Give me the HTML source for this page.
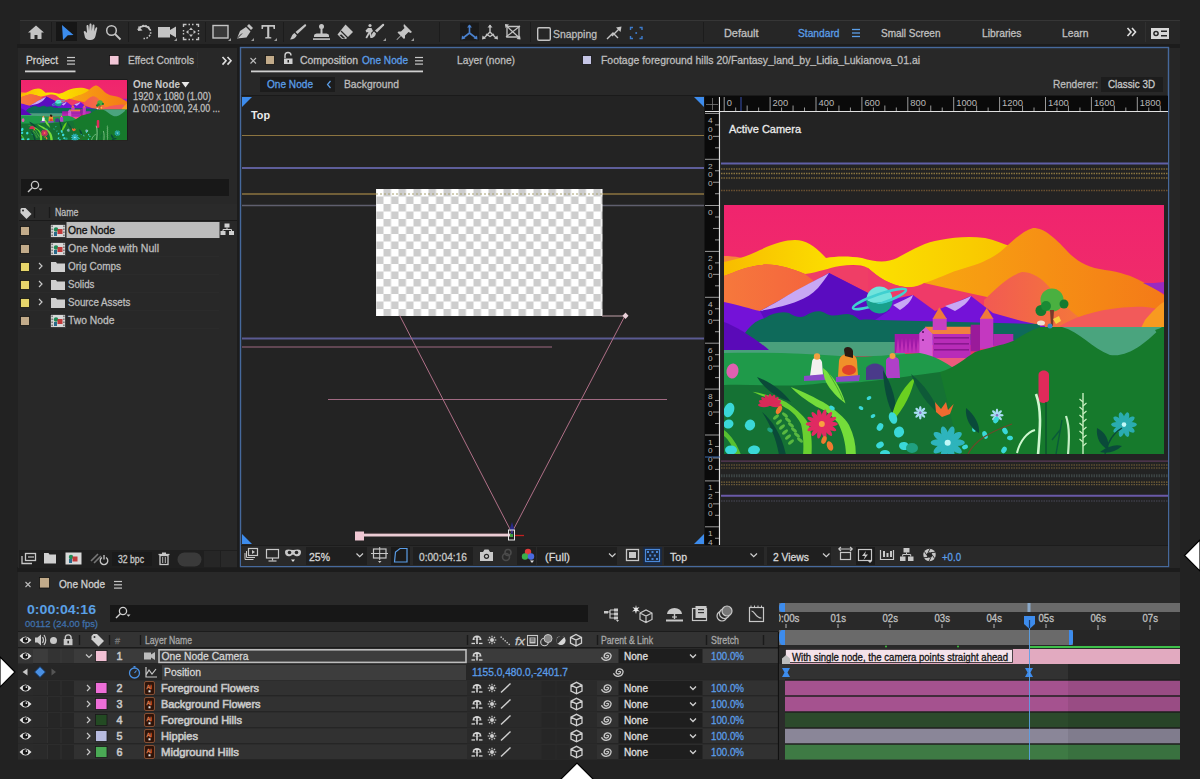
<!DOCTYPE html>
<html><head><meta charset="utf-8">
<style>
*{margin:0;padding:0}
html,body{width:1200px;height:779px;overflow:hidden;background:#1e1e1e}
svg{display:block;font-family:"Liberation Sans",sans-serif}
</style></head><body>
<svg width="1200" height="779" viewBox="0 0 1200 779">
<rect x="0" y="0" width="1200" height="779" fill="#222222" />
<rect x="20" y="20" width="1160" height="24" fill="#262626" />
<line x1="20" y1="20.5" x2="1180" y2="20.5" stroke="#363636" stroke-width="1" />
<rect x="17" y="44" width="1163" height="4" fill="#1c1c1c" />
<rect x="17" y="567" width="1163" height="5" fill="#1c1c1c" />
<rect x="237" y="44" width="3" height="524" fill="#1c1c1c" />
<rect x="18" y="48" width="219" height="520" fill="#282828" />
<rect x="240" y="47" width="929" height="521" fill="#232323" />
<rect x="1169" y="48" width="11" height="520" fill="#262626" />
<rect x="18" y="572" width="1162" height="207" fill="#292929" />
<defs><linearGradient id="gsky" x1="0" x2="0" y1="0" y2="1"><stop offset="0" stop-color="#f0246e"/><stop offset="1" stop-color="#ee3a62"/></linearGradient><linearGradient id="gy" x1="0" x2="1" y1="0" y2="0"><stop offset="0" stop-color="#f8bc00"/><stop offset="0.45" stop-color="#fce400"/><stop offset="1" stop-color="#f8c400"/></linearGradient><linearGradient id="go" x1="0" x2="1" y1="0" y2="0"><stop offset="0" stop-color="#f8a610"/><stop offset="1" stop-color="#f47a18"/></linearGradient><linearGradient id="gol" x1="0" x2="1" y1="0" y2="0"><stop offset="0" stop-color="#f6783c"/><stop offset="1" stop-color="#f4603e"/></linearGradient><linearGradient id="gc" x1="0" x2="1" y1="0" y2="0"><stop offset="0" stop-color="#f25a52"/><stop offset="1" stop-color="#f47a38"/></linearGradient><clipPath id="lc"><rect x="724" y="205" width="440" height="249"/></clipPath></defs>
<line x1="51.5" y1="22" x2="51.5" y2="42" stroke="#1c1c1c" stroke-width="1" />
<line x1="128.5" y1="22" x2="128.5" y2="42" stroke="#1c1c1c" stroke-width="1" />
<line x1="205.5" y1="22" x2="205.5" y2="42" stroke="#1c1c1c" stroke-width="1" />
<line x1="283.5" y1="22" x2="283.5" y2="42" stroke="#1c1c1c" stroke-width="1" />
<line x1="439.5" y1="22" x2="439.5" y2="42" stroke="#1c1c1c" stroke-width="1" />
<line x1="530.5" y1="22" x2="530.5" y2="42" stroke="#1c1c1c" stroke-width="1" />
<line x1="703.5" y1="22" x2="703.5" y2="42" stroke="#1c1c1c" stroke-width="1" />
<path d="M36,25.5 L28,32.5 L30.5,32.5 L30.5,39 L34.5,39 L34.5,35 L37.5,35 L37.5,39 L41.5,39 L41.5,32.5 L44,32.5 Z" fill="#c4c4c4" stroke="none" stroke-width="1" />
<rect x="56" y="22" width="21" height="19" fill="#161616" />
<path d="M62,25 L73.5,35 L67.8,35.3 L63,40 Z" fill="#3b8ced" stroke="none" stroke-width="1" />
<path d="M84,33 C83,31 85,30 86,32 L87,33 L86.5,26 C86.5,24.5 88.5,24.5 88.5,26 L89,31 L89.5,24.5 C89.5,23 91.5,23 91.5,24.5 L91.8,31 L92.5,25.5 C92.6,24 94.5,24 94.5,25.5 L94.3,31.5 L95.5,28 C96,26.8 97.5,27.2 97.2,28.5 L95.5,36 C95,38.5 93,40 90.5,40 L89,40 C87,40 86,39 85,37.5 Z" fill="#c4c4c4" stroke="none" stroke-width="1" />
<circle cx="111.5" cy="30.5" r="4.8" fill="none" stroke="#c4c4c4" stroke-width="1.5"/>
<line x1="115" y1="34" x2="120.5" y2="39.5" stroke="#c4c4c4" stroke-width="1.8" />
<path d="M138,30 A6.5,6.5 0 1 1 143.5,38.5" fill="none" stroke="#c4c4c4" stroke-width="1.6" stroke-dasharray="1.6 1.4"/>
<path d="M138.5,26 L138,31 L142.5,30.5 Z" fill="#c4c4c4" stroke="none" stroke-width="1" />
<path d="M139,28.5 A6.5,6.5 0 0 1 150,30" fill="none" stroke="#c4c4c4" stroke-width="1.6" />
<path d="M158,27 L170,27 L170,30 L176,26.5 L176,37.5 L170,34 L170,37.5 L158,37.5 Z" fill="#c4c4c4" stroke="none" stroke-width="1" />
<path d="M174,41 L177,38 L177,41 Z" fill="#9a9a9a" stroke="none" stroke-width="1" />
<path d="M183.5,27 L183.5,24.5 L186.5,24.5 M196,24.5 L198.5,24.5 L198.5,27 M198.5,37 L198.5,39.5 L196,39.5 M186.5,39.5 L183.5,39.5 L183.5,37" fill="none" stroke="#c4c4c4" stroke-width="1.4" />
<path d="M188.5,24.5 L190,24.5 M192,24.5 L193.5,24.5 M188.5,39.5 L190,39.5 M192,39.5 L193.5,39.5 M183.5,30 L183.5,31.5 M183.5,33 L183.5,34.5 M198.5,30 L198.5,31.5 M198.5,33 L198.5,34.5" fill="none" stroke="#c4c4c4" stroke-width="1.4" />
<path d="M191,27.5 L189,30 L193,30 Z M191,37 L189,34.5 L193,34.5 Z M186,32 L188.5,30 L188.5,34 Z M196,32 L193.5,30 L193.5,34 Z" fill="#c4c4c4" stroke="none" stroke-width="1" />
<rect x="213" y="25.5" width="15" height="12.5" fill="#3a3a3a" stroke="#c4c4c4" stroke-width="1.4"/>
<path d="M228,41 L231,38 L231,41 Z" fill="#9a9a9a" stroke="none" stroke-width="1" />
<path d="M237,38.5 L240,31 L246,27 L250.5,31.5 L246.5,37.5 Z" fill="#c4c4c4" stroke="none" stroke-width="1" />
<path d="M247,26 L249,24 L253,28 L251,30 Z" fill="#c4c4c4" stroke="none" stroke-width="1" />
<line x1="237.5" y1="38" x2="242" y2="33.5" stroke="#262626" stroke-width="1" />
<path d="M251,41 L254,38 L254,41 Z" fill="#9a9a9a" stroke="none" stroke-width="1" />
<path d="M261.5,25 L275,25 L275,29 L273.6,29 L273.2,26.8 L269.3,26.8 L269.3,37 L271.3,37.2 L271.3,38.5 L265.2,38.5 L265.2,37.2 L267.2,37 L267.2,26.8 L263.3,26.8 L262.9,29 L261.5,29 Z" fill="#c4c4c4" stroke="none" stroke-width="1" />
<path d="M274,41 L277,38 L277,41 Z" fill="#9a9a9a" stroke="none" stroke-width="1" />
<path d="M304.5,24.5 C306,24 306.5,25 306,26 L297.5,34 L295.5,32 Z" fill="#c4c4c4" stroke="none" stroke-width="1" />
<path d="M294.5,33 L296.8,35.2 C296,38 293,39.5 290,39.5 C291.5,38 291.5,34.5 294.5,33 Z" fill="#c4c4c4" stroke="none" stroke-width="1" />
<circle cx="321.5" cy="26.5" r="2.5" fill="#c4c4c4"/>
<rect x="320.5" y="28" width="2" height="6" fill="#c4c4c4" />
<path d="M314,35.5 C314,34 316,33.5 318,33.5 L325,33.5 C327,33.5 329,34 329,35.5 L329,37 L314,37 Z" fill="#c4c4c4" stroke="none" stroke-width="1" />
<rect x="313" y="38.3" width="17" height="1.6" fill="#c4c4c4" />
<path d="M345.5,24.5 L353,32 L346,39 L342,39 L337.5,34.5 Z" fill="#c4c4c4" stroke="none" stroke-width="1" />
<path d="M341,31 L348.5,38.5" fill="none" stroke="#262626" stroke-width="1.2" />
<path d="M339.5,35 L343,38.5 L345.5,38.5 L341.5,34.5 Z" fill="#262626" stroke="none" stroke-width="1" />
<circle cx="370" cy="25.5" r="1.6" fill="#c4c4c4"/>
<path d="M368,28 L371.5,28 L373,31 L371,33 L372.5,38 L370.5,38 L369.5,34 L367,38.5 L365.5,37.5 L368.5,32 L366.5,32.5 L365.5,30.5 Z" fill="#c4c4c4" stroke="none" stroke-width="1" />
<path d="M382.5,24 C384,23.5 384.5,24.5 384,25.5 L377,32.5 L375,30.5 Z" fill="#c4c4c4" stroke="none" stroke-width="1" />
<path d="M374,31.5 L376,33.5 C375.5,36.5 373,38 370.5,38 C372,36.5 371.5,33 374,31.5 Z" fill="#c4c4c4" stroke="none" stroke-width="1" />
<path d="M383,41 L386,38 L386,41 Z" fill="#9a9a9a" stroke="none" stroke-width="1" />
<path d="M404,24 L412,32 L410.5,33 L408.5,32 L405,35.5 L405,38 L404,39 L401,36 L397,40 L396.5,39.5 L400.5,35.5 L397.5,32.5 L398.5,31.5 L401,31.5 L404.5,28 L403.5,26 Z" fill="#c4c4c4" stroke="none" stroke-width="1" />
<path d="M411,41 L414,38 L414,41 Z" fill="#9a9a9a" stroke="none" stroke-width="1" />
<rect x="460" y="22.5" width="19" height="18" fill="#1a1a1a" />
<path d="M469.5,25 L469.5,33 M469.5,33 L463,38 M469.5,33 L476,38" fill="none" stroke="#4a80cc" stroke-width="1.6" />
<path d="M467,27.5 L469.5,24.5 L472,27.5 Z M462,35.5 L461.5,39.5 L465.5,38.5 Z M477,35.5 L477.5,39.5 L473.5,38.5 Z" fill="#4a80cc" stroke="none" stroke-width="1" />
<path d="M490,25 L490,32 L484,38 M490,32 L496,38 M486,34 L490,36.5 L494,34" fill="none" stroke="#c4c4c4" stroke-width="1.4" />
<path d="M487.5,27.5 L490,24.5 L492.5,27.5 Z M482.5,35.5 L482,39.5 L486,38.5 Z M497.5,35.5 L498,39.5 L494,38.5 Z" fill="#c4c4c4" stroke="none" stroke-width="1" />
<path d="M507,26.5 L519,26.5 L519,37 L507,37 Z" fill="none" stroke="#c4c4c4" stroke-width="1.3" transform="skewX(0)"/>
<path d="M505.5,25 L520,38.5 M506,37 L520,26" fill="none" stroke="#c4c4c4" stroke-width="1.2" />
<path d="M505,24 L509,24.5 L505.5,28 Z M520.5,39.5 L516.5,39 L520,35.5 Z" fill="#c4c4c4" stroke="none" stroke-width="1" />
<rect x="537.7" y="27.7" width="12.6" height="12.6" fill="none" stroke="#c4c4c4" stroke-width="1.4" rx="1.2"/>
<text x="553" y="37.8" font-size="11.2" fill="#bdbdbd" font-weight="normal" text-anchor="start" textLength="44" lengthAdjust="spacingAndGlyphs" stroke="#bdbdbd" stroke-width="0.3" >Snapping</text>
<path d="M607,39 L613,33 L618,38 M612,36 L620,28" fill="none" stroke="#c4c4c4" stroke-width="1.4" />
<path d="M621.5,26.5 L616,27.5 L620.5,32 Z" fill="#c4c4c4" stroke="none" stroke-width="1" />
<path d="M630.5,30 L630.5,27.5 L633,27.5 M639.5,27.5 L642,27.5 L642,30 M642,36 L642,38.5 L639.5,38.5 M633,38.5 L630.5,38.5 L630.5,36" fill="none" stroke="#3e7ccc" stroke-width="1.4" />
<circle cx="636.2" cy="33" r="1" fill="#3e7ccc"/>
<text x="724" y="37" font-size="11.3" fill="#c0c0c0" font-weight="normal" text-anchor="start" textLength="34.5" lengthAdjust="spacingAndGlyphs" stroke="#c0c0c0" stroke-width="0.3" >Default</text>
<text x="798" y="37" font-size="11.3" fill="#5b9ee8" font-weight="normal" text-anchor="start" textLength="41.5" lengthAdjust="spacingAndGlyphs" stroke="#5b9ee8" stroke-width="0.3" >Standard</text>
<line x1="852" y1="29.5" x2="860" y2="29.5" stroke="#5b9ee8" stroke-width="1.3" />
<line x1="852" y1="33" x2="860" y2="33" stroke="#5b9ee8" stroke-width="1.3" />
<line x1="852" y1="36.5" x2="860" y2="36.5" stroke="#5b9ee8" stroke-width="1.3" />
<text x="881" y="37" font-size="11.3" fill="#c0c0c0" font-weight="normal" text-anchor="start" textLength="59.5" lengthAdjust="spacingAndGlyphs" stroke="#c0c0c0" stroke-width="0.3" >Small Screen</text>
<text x="982" y="37" font-size="11.3" fill="#c0c0c0" font-weight="normal" text-anchor="start" textLength="39.5" lengthAdjust="spacingAndGlyphs" stroke="#c0c0c0" stroke-width="0.3" >Libraries</text>
<text x="1062" y="37" font-size="11.3" fill="#c0c0c0" font-weight="normal" text-anchor="start" textLength="26.5" lengthAdjust="spacingAndGlyphs" stroke="#c0c0c0" stroke-width="0.3" >Learn</text>
<path d="M1127.5,28 L1131,32 L1127.5,36 M1132,28 L1135.5,32 L1132,36" fill="none" stroke="#e0e0e0" stroke-width="1.6" />
<line x1="1145.5" y1="22" x2="1145.5" y2="42" stroke="#303030" stroke-width="1" />
<rect x="1151" y="28" width="18" height="11" fill="#d8d8d8" />
<circle cx="1156" cy="33.5" r="2.8" fill="#262626"/>
<circle cx="1156" cy="33.5" r="1.3" fill="#d8d8d8"/>
<rect x="1161" y="30.5" width="6" height="1.5" fill="#262626" />
<rect x="1161" y="35" width="6" height="1.5" fill="#262626" />
<text x="26" y="64.2" font-size="11" fill="#d0d0d0" font-weight="normal" text-anchor="start" textLength="32" lengthAdjust="spacingAndGlyphs" stroke="#d0d0d0" stroke-width="0.3" >Project</text>
<line x1="67" y1="57.5" x2="75" y2="57.5" stroke="#c8c8c8" stroke-width="1.2" />
<line x1="67" y1="60.8" x2="75" y2="60.8" stroke="#c8c8c8" stroke-width="1.2" />
<line x1="67" y1="64.1" x2="75" y2="64.1" stroke="#c8c8c8" stroke-width="1.2" />
<rect x="25" y="70.5" width="50.5" height="1.8" fill="#d0d0d0" />
<rect x="109.5" y="55.5" width="9.5" height="9.5" fill="#f2c6d6" stroke="#111" stroke-width="0.8"/>
<text x="128" y="64.2" font-size="11" fill="#bdbdbd" font-weight="normal" text-anchor="start" textLength="66" lengthAdjust="spacingAndGlyphs" stroke="#bdbdbd" stroke-width="0.3" >Effect Controls</text>
<line x1="197.5" y1="52" x2="197.5" y2="68" stroke="#2e2e2e" stroke-width="1" />
<path d="M222.5,57 L226,60.8 L222.5,64.6 M227.5,57 L231,60.8 L227.5,64.6" fill="none" stroke="#e0e0e0" stroke-width="1.6" />
<rect x="20.5" y="79.5" width="107" height="61" fill="#111" />
<g transform="translate(21,80) scale(0.2409,0.2419)"><g transform="translate(-724,-205)" clip-path="url(#lc)"><rect x="724" y="205" width="440" height="249" fill="url(#gsky)"/><path d="M724,256 C735,256 745,258 752,262 L752,290 L724,290 Z" fill="#f6863a" /><path d="M724,270 C780,262 860,262 930,275 C960,270 990,262 1010,276 L1010,320 L724,320 Z" fill="#ef3e66" /><path d="M724,262 C738,259 748,256 760,250 C775,243 785,240 795,240 C806,240 815,246 826,258 C836,256 850,256 862,258 C875,262 887,263 897,258 C910,251 925,242 940,240 C955,237 970,236 985,238 C995,240 1003,244 1010,246 L1010,262 C990,262 970,268 953,273 C935,281 920,289 905,287 C890,285 878,277 868,268 C860,264 850,265 840,266 C828,268 820,272 805,274 C790,268 775,263 760,265 C745,267 735,272 724,276 Z" fill="url(#gy)" /><path d="M724,276 C735,272 745,267 760,265 C775,263 790,268 805,274 C815,282 825,290 835,300 L835,330 L724,330 Z" fill="url(#gol)" /><path d="M924,283 C935,280 950,272 965,268 C980,264 992,258 1000,252 C1010,244 1020,232 1033,228 C1045,228 1055,238 1071,255 C1080,263 1090,268 1105,270 C1120,272 1132,276 1141,281 C1150,286 1158,290 1164,295 L1164,340 L924,340 Z" fill="url(#go)" /><path d="M868,268 C878,277 890,285 905,287 C915,288 920,285 924,283 C945,288 965,292 987,297 C992,310 995,320 996,330 L868,330 Z" fill="#ef3a68" /><path d="M984,300 C995,290 1008,276 1022,272 C1032,272 1042,278 1050,288 C1058,298 1066,308 1080,318 L1090,330 L984,330 Z" fill="url(#gc)" /><path d="M1060,326 C1080,314 1105,308 1133,307 C1145,306 1152,308 1158,309 L1164,309 L1164,330 L1060,330 Z" fill="#f25a5a" /><path d="M1145,320 C1152,312 1158,305 1164,302 L1164,330 L1140,330 Z" fill="#f89a20" /><path d="M1143,283 C1150,283 1158,283 1164,282 L1164,294 C1157,290 1150,286 1143,283 Z" fill="#9a2ac0" /><path d="M724,302 C740,305 750,309 760,311 L790,300 L829,273 L868,293 L880,302 L913,295 L935,311 L971,296 L993,313 C1010,318 1025,322 1045,326 L1045,345 L724,345 Z" fill="#7412d8" /><path d="M760,311 L829,273 L868,293 L890,310 L860,330 L770,330 Z" fill="#5a0cc0" /><path d="M760,311 C772,305 785,297 795,291 C808,284 820,278 829,273 C826,278 822,283 818,288 C812,294 806,298 798,301 C788,305 776,308 760,311 Z" fill="#c8a8f4" /><path d="M893,305 C900,302 908,298 913,295 C911,302 906,306 900,310 Z" fill="#c8a8f4" /><path d="M945,306 C955,303 965,299 971,296 C968,303 962,307 955,311 Z" fill="#c8a8f4" /><path d="M740,345 C742,334 752,321 765,318 C772,313 782,311 789,313 C795,317 800,318 805,316 C812,311 820,310 825,313 C833,318 840,314 847,314 C853,314 857,318 860,320 C870,319 880,320 890,322 L905,322 L905,345 Z" fill="#0e6a5a" /><path d="M880,320 L1040,324 L1040,340 L880,340 Z" fill="#0e6a5a" /><circle cx="879.5" cy="300" r="13" fill="#18a08c" /><path d="M866.5,300 A13,13 0 0 1 892.5,299 C885,301 876,306 866.5,300 Z" fill="#70e4dc" /><ellipse cx="879.5" cy="299" rx="28" ry="4.8" fill="none" stroke="#40d0d0" stroke-width="2.6" transform="rotate(-19 879.5 299)"/><path d="M866.5,300 A13,13 0 0 0 892.5,301 C885,303 876,307 866.5,300 Z" fill="#18a08c" /><path d="M724,342 L905,342 L905,356 L724,356 Z" fill="#4aa07c" /><path d="M724,322 C735,326 755,338 769,350 L724,350 Z" fill="#5a0ab8" /><path d="M894.7,334 L920,334 L920,353 L894.7,353 Z" fill="#a01aa8" /><path d="M896,353 L898,338 L900,353 Z" fill="#c030b8" /><path d="M900,353 L902,338 L904,353 Z" fill="#c030b8" /><path d="M904,353 L906,338 L908,353 Z" fill="#c030b8" /><path d="M908,353 L910,338 L912,353 Z" fill="#c030b8" /><path d="M912,353 L914,338 L916,353 Z" fill="#c030b8" /><path d="M916,353 L918,338 L920,353 Z" fill="#c030b8" /><path d="M932.7,330 L970.7,330 L970.7,358 L932.7,358 Z" fill="#b82cb8" /><path d="M919.3,333 L926,326.7 L932.7,333 L932.7,356.7 L919.3,356.7 Z" fill="#d45ad4" /><path d="M925,326.7 L970.7,326.7 L970.7,334 L932.7,334 Z" fill="#f28040" /><path d="M936,358 L966.7,358 L962,368.7 L940,368.7 Z" fill="#ee5a7c" /><path d="M932.7,318 L946.7,318 L946.7,330 L932.7,330 Z" fill="#c840c0" /><path d="M932.7,318.7 L939.3,307.3 L946.7,318.7 Z" fill="#f07a3a" /><path d="M970.7,324.7 L980,324.7 L980,351.3 L970.7,351.3 Z" fill="#9a1a9a" /><path d="M980,318 L993.3,318 L993.3,348.7 L980,348.7 Z" fill="#c438c0" /><path d="M980,318.7 L986.7,308 L993.3,318.7 Z" fill="#f07a3a" /><path d="M993.3,334 L1013.3,334 L1013.3,346 L993.3,346 Z" fill="#b02aae" /><rect x="934" y="337" width="35" height="1.6" fill="#8a1890"/><rect x="934" y="343" width="35" height="1.6" fill="#8a1890"/><rect x="934" y="349" width="35" height="1.6" fill="#8a1890"/><rect x="922" y="331" width="2" height="2" fill="#7a1a80"/><rect x="922" y="339" width="2" height="2" fill="#7a1a80"/><path d="M724,353 C760,352 800,353 840,356 C870,358 895,354 920,353 C935,356 945,362 955,369 L955,420 L724,420 Z" fill="#1f9a4a" /><path d="M940,372 C955,368 965,358 975,352 C990,347 1000,346 1013,341 C1022,336 1030,330 1040,327 L1164,327 L1164,454 L940,454 Z" fill="#167a2c" /><path d="M1062,327 C1080,332 1092,348 1110,355 C1130,358 1148,340 1162,327 Z" fill="#4aa47e" /><path d="M1155,330 L1164,327 L1164,345 Z" fill="#167a2c" /><circle cx="1052" cy="300" r="11.5" fill="#4ab040" /><circle cx="1041" cy="310.5" r="5.5" fill="#167a30" /><circle cx="1064" cy="304" r="4.5" fill="#167a30" /><circle cx="1046" cy="306" r="5" fill="#1a8a34" /><path d="M1050,310 L1054,310 L1053,326 L1051,326 Z" fill="#7a3a2a" /><ellipse cx="1041" cy="323" rx="4" ry="2.5" fill="#f0e0d0" transform="rotate(0 1041 323)"/><ellipse cx="1050" cy="326" rx="2.5" ry="2.5" fill="#3a8ac0" transform="rotate(0 1050 326)"/><path d="M1053,319 L1059,316 L1061,321 L1056,324 Z" fill="#f8d040" /><path d="M724,385 C760,384 790,388 823,383 C850,385 880,380 940,372 L960,454 L724,454 Z" fill="#157234" /><path d="M812,362 C812,357 820,356 822,362 L823,375 L810,376 Z" fill="#f4f0f0" /><circle cx="817" cy="356.5" r="3.2" fill="#f0a040" /><path d="M804,376 L826,374 L826,380 L804,381 Z" fill="#8a48c8" /><path d="M839,361 C840,352 856,351 857,361 L858,376 L838,377 Z" fill="#f0902a" /><path d="M844,350 C844,346 852,346 853,351 L853,358 L845,356 Z" fill="#2a1a12" /><ellipse cx="849" cy="370" rx="7" ry="5" fill="#e0402a" transform="rotate(0 849 370)"/><path d="M836,377 L860,375 L859,381 L836,382 Z" fill="#8a48c8" /><path d="M886,361 C886,355 899,355 899,361 L900,378 L886,378 Z" fill="#b040c8" /><circle cx="892.5" cy="356" r="3" fill="#f0a040" /><path d="M866,368 C870,362 880,362 884,368 L886,379 L866,380 Z" fill="#4a3a8a" /><path d="M757,377 C770,382 782,390 791,402 C778,398 765,390 757,377 Z" fill="#0a4a38" /><path d="M752.5,391.7 C766,394 778,398 786,402 C798,410 806,418 809,425 C812,435 812,445 811.5,455 L803,455 C804,445 803,432 801,424 C796,414 790,410 783.5,406.4 C773,400 762,396 752.5,391.7 Z" fill="#6ad030" /><path d="M790.8,387 C805,392 815,398 823,402 C836,410 845,418 849,425 C854,435 856,445 855.8,455 L846,455 C846,445 843,432 838,423 C832,415 825,410 816,406.4 C806,400 797,394 790.8,387 Z" fill="#74dc3a" /><path d="M823,368 C832,375 840,385 845.5,403.5 C838,398 830,390 826,382 C824,378 823,372 823,368 Z" fill="#7ae040" /><path d="M828,372 C834,382 840,392 843,400" fill="none" stroke="#3a9a2a" stroke-width="0.8"/><path d="M883,370 C892,385 897,400 896,420 C890,410 884,395 883,370 Z" fill="#0a4a3a" /><path d="M915,377 C912,392 905,408 891,423 C892,408 900,390 915,377 Z" fill="#6ad020" /><path d="M911,374 C925,385 935,400 939,414 C928,405 918,392 911,374 Z" fill="#0e5a38" /><path d="M724,430 C732,436 738,446 741,455 L735,455 C733,447 729,440 724,436 Z" fill="#58c030" /><path d="M762,412 C772,420 782,435 786,455 L779,455 C776,438 770,424 762,412 Z" fill="#0a4a38" /><ellipse cx="776" cy="417" rx="3.6" ry="1.5" fill="#58b840" transform="rotate(-40 776 417)"/><ellipse cx="785" cy="415" rx="3.6" ry="1.5" fill="#58b840" transform="rotate(40 785 415)"/><ellipse cx="779" cy="422" rx="3.6" ry="1.5" fill="#58b840" transform="rotate(-40 779 422)"/><ellipse cx="788" cy="420" rx="3.6" ry="1.5" fill="#58b840" transform="rotate(40 788 420)"/><ellipse cx="782" cy="427" rx="3.6" ry="1.5" fill="#58b840" transform="rotate(-40 782 427)"/><ellipse cx="791" cy="425" rx="3.6" ry="1.5" fill="#58b840" transform="rotate(40 791 425)"/><ellipse cx="785" cy="432" rx="3.6" ry="1.5" fill="#58b840" transform="rotate(-40 785 432)"/><ellipse cx="794" cy="430" rx="3.6" ry="1.5" fill="#58b840" transform="rotate(40 794 430)"/><ellipse cx="788" cy="437" rx="3.6" ry="1.5" fill="#58b840" transform="rotate(-40 788 437)"/><ellipse cx="797" cy="435" rx="3.6" ry="1.5" fill="#58b840" transform="rotate(40 797 435)"/><ellipse cx="791" cy="442" rx="3.6" ry="1.5" fill="#58b840" transform="rotate(-40 791 442)"/><ellipse cx="800" cy="440" rx="3.6" ry="1.5" fill="#58b840" transform="rotate(40 800 440)"/><ellipse cx="829.8" cy="424.0" rx="8" ry="2.4" fill="#e02a62" transform="rotate(0 829.8 424.0)"/><ellipse cx="829.0" cy="427.0" rx="8" ry="2.4" fill="#e02a62" transform="rotate(26 829.0 427.0)"/><ellipse cx="826.8" cy="429.5" rx="8" ry="2.4" fill="#e02a62" transform="rotate(51 826.8 429.5)"/><ellipse cx="823.6" cy="430.8" rx="8" ry="2.4" fill="#e02a62" transform="rotate(77 823.6 430.8)"/><ellipse cx="820.0" cy="430.8" rx="8" ry="2.4" fill="#e02a62" transform="rotate(103 820.0 430.8)"/><ellipse cx="816.8" cy="429.5" rx="8" ry="2.4" fill="#e02a62" transform="rotate(129 816.8 429.5)"/><ellipse cx="814.6" cy="427.0" rx="8" ry="2.4" fill="#e02a62" transform="rotate(154 814.6 427.0)"/><ellipse cx="813.8" cy="424.0" rx="8" ry="2.4" fill="#e02a62" transform="rotate(180 813.8 424.0)"/><ellipse cx="814.6" cy="421.0" rx="8" ry="2.4" fill="#e02a62" transform="rotate(206 814.6 421.0)"/><ellipse cx="816.8" cy="418.5" rx="8" ry="2.4" fill="#e02a62" transform="rotate(231 816.8 418.5)"/><ellipse cx="820.0" cy="417.2" rx="8" ry="2.4" fill="#e02a62" transform="rotate(257 820.0 417.2)"/><ellipse cx="823.6" cy="417.2" rx="8" ry="2.4" fill="#e02a62" transform="rotate(283 823.6 417.2)"/><ellipse cx="826.8" cy="418.5" rx="8" ry="2.4" fill="#e02a62" transform="rotate(309 826.8 418.5)"/><ellipse cx="829.0" cy="421.0" rx="8" ry="2.4" fill="#e02a62" transform="rotate(334 829.0 421.0)"/><circle cx="821.8" cy="424" r="3" fill="#f8a040" /><ellipse cx="764.0" cy="405.0" rx="6" ry="2.2" fill="#d82a58" transform="rotate(0 764.0 405.0)"/><ellipse cx="764.5" cy="403.1" rx="6" ry="2.2" fill="#d82a58" transform="rotate(22 764.5 403.1)"/><ellipse cx="765.8" cy="401.5" rx="6" ry="2.2" fill="#d82a58" transform="rotate(45 765.8 401.5)"/><ellipse cx="767.7" cy="400.4" rx="6" ry="2.2" fill="#d82a58" transform="rotate(68 767.7 400.4)"/><ellipse cx="770.0" cy="400.0" rx="6" ry="2.2" fill="#d82a58" transform="rotate(90 770.0 400.0)"/><ellipse cx="772.3" cy="400.4" rx="6" ry="2.2" fill="#d82a58" transform="rotate(112 772.3 400.4)"/><ellipse cx="774.2" cy="401.5" rx="6" ry="2.2" fill="#d82a58" transform="rotate(135 774.2 401.5)"/><ellipse cx="775.5" cy="403.1" rx="6" ry="2.2" fill="#d82a58" transform="rotate(158 775.5 403.1)"/><ellipse cx="776.0" cy="405.0" rx="6" ry="2.2" fill="#d82a58" transform="rotate(180 776.0 405.0)"/><ellipse cx="779" cy="410" rx="2.5" ry="4.5" fill="#f07a30" transform="rotate(30 779 410)"/><path d="M1038.5,375 C1038.5,369 1049,369 1049,375 L1049,400 C1047,404 1040,404 1038.5,400 Z" fill="#e02a5a" /><path d="M1046,402 L1046,455" stroke="#0a4a30" stroke-width="1.2"/><path d="M935,402 L941,409 L946,402 L948,410 L953.7,404 L950,414 L942,417 L936,412 Z" fill="#f06a30" /><ellipse cx="732.5" cy="371" rx="6" ry="7.5" fill="#e060b0" transform="rotate(10 732.5 371)"/><ellipse cx="830" cy="446" rx="3" ry="5" fill="#f07a30" transform="rotate(-20 830 446)"/><ellipse cx="824" cy="440" rx="2.5" ry="4" fill="#f07a30" transform="rotate(20 824 440)"/><ellipse cx="957.1" cy="442.7" rx="7.7" ry="3.4" fill="#2eb4bc" transform="rotate(0 957.1 442.7)"/><ellipse cx="955.3" cy="448.2" rx="7.7" ry="3.4" fill="#2eb4bc" transform="rotate(36 955.3 448.2)"/><ellipse cx="950.6" cy="451.6" rx="7.7" ry="3.4" fill="#2eb4bc" transform="rotate(72 950.6 451.6)"/><ellipse cx="944.8" cy="451.6" rx="7.7" ry="3.4" fill="#2eb4bc" transform="rotate(108 944.8 451.6)"/><ellipse cx="940.1" cy="448.2" rx="7.7" ry="3.4" fill="#2eb4bc" transform="rotate(144 940.1 448.2)"/><ellipse cx="938.4" cy="442.7" rx="7.7" ry="3.4" fill="#2eb4bc" transform="rotate(180 938.4 442.7)"/><ellipse cx="940.1" cy="437.2" rx="7.7" ry="3.4" fill="#2eb4bc" transform="rotate(216 940.1 437.2)"/><ellipse cx="944.8" cy="433.8" rx="7.7" ry="3.4" fill="#2eb4bc" transform="rotate(252 944.8 433.8)"/><ellipse cx="950.6" cy="433.8" rx="7.7" ry="3.4" fill="#2eb4bc" transform="rotate(288 950.6 433.8)"/><ellipse cx="955.3" cy="437.2" rx="7.7" ry="3.4" fill="#2eb4bc" transform="rotate(324 955.3 437.2)"/><circle cx="947.7" cy="442.7" r="3.06" fill="#c0f8f8" /><ellipse cx="1131.0" cy="424.6" rx="5.8" ry="2.6" fill="#2aacb0" transform="rotate(0 1131.0 424.6)"/><ellipse cx="1129.7" cy="428.7" rx="5.8" ry="2.6" fill="#2aacb0" transform="rotate(36 1129.7 428.7)"/><ellipse cx="1126.2" cy="431.3" rx="5.8" ry="2.6" fill="#2aacb0" transform="rotate(72 1126.2 431.3)"/><ellipse cx="1121.8" cy="431.3" rx="5.8" ry="2.6" fill="#2aacb0" transform="rotate(108 1121.8 431.3)"/><ellipse cx="1118.3" cy="428.7" rx="5.8" ry="2.6" fill="#2aacb0" transform="rotate(144 1118.3 428.7)"/><ellipse cx="1117.0" cy="424.6" rx="5.8" ry="2.6" fill="#2aacb0" transform="rotate(180 1117.0 424.6)"/><ellipse cx="1118.3" cy="420.5" rx="5.8" ry="2.6" fill="#2aacb0" transform="rotate(216 1118.3 420.5)"/><ellipse cx="1121.8" cy="417.9" rx="5.8" ry="2.6" fill="#2aacb0" transform="rotate(252 1121.8 417.9)"/><ellipse cx="1126.2" cy="417.9" rx="5.8" ry="2.6" fill="#2aacb0" transform="rotate(288 1126.2 417.9)"/><ellipse cx="1129.7" cy="420.5" rx="5.8" ry="2.6" fill="#2aacb0" transform="rotate(324 1129.7 420.5)"/><circle cx="1124" cy="424.6" r="2.304" fill="#c0f8f8" /><ellipse cx="924.0" cy="412.7" rx="3.0" ry="1.3" fill="#a8dcf4" transform="rotate(0 924.0 412.7)"/><ellipse cx="922.9" cy="415.3" rx="3.0" ry="1.3" fill="#a8dcf4" transform="rotate(45 922.9 415.3)"/><ellipse cx="920.3" cy="416.4" rx="3.0" ry="1.3" fill="#a8dcf4" transform="rotate(90 920.3 416.4)"/><ellipse cx="917.7" cy="415.3" rx="3.0" ry="1.3" fill="#a8dcf4" transform="rotate(135 917.7 415.3)"/><ellipse cx="916.6" cy="412.7" rx="3.0" ry="1.3" fill="#a8dcf4" transform="rotate(180 916.6 412.7)"/><ellipse cx="917.7" cy="410.1" rx="3.0" ry="1.3" fill="#a8dcf4" transform="rotate(225 917.7 410.1)"/><ellipse cx="920.3" cy="409.0" rx="3.0" ry="1.3" fill="#a8dcf4" transform="rotate(270 920.3 409.0)"/><ellipse cx="922.9" cy="410.1" rx="3.0" ry="1.3" fill="#a8dcf4" transform="rotate(315 922.9 410.1)"/><circle cx="920.3" cy="412.7" r="1.206" fill="#8a6ac8" /><ellipse cx="1000.7" cy="415.3" rx="3.0" ry="1.3" fill="#a8dcf4" transform="rotate(0 1000.7 415.3)"/><ellipse cx="999.6" cy="417.9" rx="3.0" ry="1.3" fill="#a8dcf4" transform="rotate(45 999.6 417.9)"/><ellipse cx="997.0" cy="419.0" rx="3.0" ry="1.3" fill="#a8dcf4" transform="rotate(90 997.0 419.0)"/><ellipse cx="994.4" cy="417.9" rx="3.0" ry="1.3" fill="#a8dcf4" transform="rotate(135 994.4 417.9)"/><ellipse cx="993.3" cy="415.3" rx="3.0" ry="1.3" fill="#a8dcf4" transform="rotate(180 993.3 415.3)"/><ellipse cx="994.4" cy="412.7" rx="3.0" ry="1.3" fill="#a8dcf4" transform="rotate(225 994.4 412.7)"/><ellipse cx="997.0" cy="411.6" rx="3.0" ry="1.3" fill="#a8dcf4" transform="rotate(270 997.0 411.6)"/><ellipse cx="999.6" cy="412.7" rx="3.0" ry="1.3" fill="#a8dcf4" transform="rotate(315 999.6 412.7)"/><circle cx="997" cy="415.3" r="1.206" fill="#8a6ac8" /><ellipse cx="729" cy="410" rx="5" ry="7.5" fill="#3ad8d8" transform="rotate(20 729 410)"/><ellipse cx="728.5" cy="424" rx="5" ry="4.5" fill="#3ad8d8" transform="rotate(-20 728.5 424)"/><ellipse cx="731" cy="450" rx="6" ry="4.5" fill="#3ad8d8" transform="rotate(0 731 450)"/><ellipse cx="750" cy="425" rx="5" ry="5.5" fill="#3ad8d8" transform="rotate(30 750 425)"/><ellipse cx="754" cy="450" rx="6" ry="4.5" fill="#3ad8d8" transform="rotate(-10 754 450)"/><ellipse cx="893" cy="418" rx="4" ry="6" fill="#3ad8d8" transform="rotate(-20 893 418)"/><ellipse cx="899" cy="432" rx="5" ry="5.5" fill="#3ad8d8" transform="rotate(20 899 432)"/><ellipse cx="880" cy="427" rx="3" ry="4" fill="#3ad8d8" transform="rotate(30 880 427)"/><ellipse cx="904" cy="446" rx="5" ry="4" fill="#3ad8d8" transform="rotate(10 904 446)"/><ellipse cx="880" cy="445" rx="4" ry="3" fill="#3ad8d8" transform="rotate(-30 880 445)"/><ellipse cx="975" cy="428" rx="2.5" ry="4" fill="#3ad8d8" transform="rotate(20 975 428)"/><ellipse cx="985" cy="435" rx="2.5" ry="4" fill="#3ad8d8" transform="rotate(-20 985 435)"/><ellipse cx="996" cy="420" rx="2.5" ry="3.5" fill="#3ad8d8" transform="rotate(30 996 420)"/><ellipse cx="1005" cy="431" rx="2.5" ry="3.5" fill="#3ad8d8" transform="rotate(-30 1005 431)"/><ellipse cx="1010" cy="438" rx="3" ry="2.2" fill="#3ad8d8" transform="rotate(10 1010 438)"/><ellipse cx="1004" cy="450" rx="2.5" ry="3.5" fill="#3ad8d8" transform="rotate(30 1004 450)"/><ellipse cx="965" cy="447" rx="3" ry="2.2" fill="#3ad8d8" transform="rotate(-20 965 447)"/><ellipse cx="885" cy="453" rx="5" ry="3" fill="#3ad8d8" transform="rotate(0 885 453)"/><ellipse cx="832" cy="408" rx="3" ry="2" fill="#3ad8d8" transform="rotate(30 832 408)"/><ellipse cx="869" cy="398" rx="2.5" ry="1.8" fill="#3ad8d8" transform="rotate(-30 869 398)"/><ellipse cx="861" cy="408" rx="2.5" ry="1.8" fill="#3ad8d8" transform="rotate(30 861 408)"/><ellipse cx="873" cy="416" rx="2.5" ry="1.8" fill="#3ad8d8" transform="rotate(-30 873 416)"/><ellipse cx="912" cy="448" rx="6" ry="5" fill="#20a080" transform="rotate(0 912 448)"/><ellipse cx="770" cy="430" rx="3" ry="2" fill="#20a080" transform="rotate(30 770 430)"/><path d="M1036,394 C1042,410 1040,430 1038,455" stroke="#d0f8d0" stroke-width="2.6" fill="none"/><path d="M1066,416 C1070,428 1069,442 1068,455" stroke="#c8f0c8" stroke-width="2.2" fill="none"/><path d="M1083,393 L1083,455" stroke="#c8f0c0" stroke-width="1.4" fill="none"/><path d="M1083,402 l-3.5,-3 M1083,406 l3.5,-3" stroke="#c8f0c0" stroke-width="1.2"/><path d="M1083,410 l-3.5,-3 M1083,414 l3.5,-3" stroke="#c8f0c0" stroke-width="1.2"/><path d="M1083,418 l-3.5,-3 M1083,422 l3.5,-3" stroke="#c8f0c0" stroke-width="1.2"/><path d="M1083,426 l-3.5,-3 M1083,430 l3.5,-3" stroke="#c8f0c0" stroke-width="1.2"/><path d="M1083,434 l-3.5,-3 M1083,438 l3.5,-3" stroke="#c8f0c0" stroke-width="1.2"/><path d="M1083,442 l-3.5,-3 M1083,446 l3.5,-3" stroke="#c8f0c0" stroke-width="1.2"/><path d="M1017,453 C1020,440 1028,432 1035,430" stroke="#d0f8d0" stroke-width="2" fill="none"/><path d="M1097,428 C1105,432 1110,440 1108,450 C1100,445 1096,438 1097,428 Z" fill="#0a4a3a" /><path d="M1100,452 C1108,446 1116,444 1122,446 C1115,452 1108,454 1100,452 Z" fill="#0a4a3a" /><path d="M1105,454 C1108,440 1115,432 1122,428" stroke="#0a4a3a" stroke-width="1.4" fill="none"/><path d="M966,408 C975,415 980,425 979,433 C970,428 965,418 966,408 Z" fill="#0a4a3a" /><path d="M968,454 C975,440 990,432 1012,424" stroke="#6a4a2a" stroke-width="1.3" fill="none"/><path d="M1056,454 L1062,420 M1052,440 L1060,430" stroke="#0a5a3a" stroke-width="1.4" fill="none"/></g></g>
<text x="133" y="88" font-size="11" fill="#c8c8c8" font-weight="bold" text-anchor="start" textLength="47" lengthAdjust="spacingAndGlyphs" >One Node</text>
<path d="M181.5,82 L189.5,82 L185.5,87.5 Z" fill="#e8e8e8" stroke="none" stroke-width="1" />
<text x="133" y="100" font-size="10.5" fill="#bdbdbd" font-weight="normal" text-anchor="start" textLength="78" lengthAdjust="spacingAndGlyphs" stroke="#bdbdbd" stroke-width="0.3" >1920 x 1080 (1.00)</text>
<text x="133" y="111.8" font-size="10.5" fill="#bdbdbd" font-weight="normal" text-anchor="start" textLength="87" lengthAdjust="spacingAndGlyphs" stroke="#bdbdbd" stroke-width="0.3" >Δ 0:00:10:00, 24.00 ...</text>
<rect x="21" y="179" width="208" height="17" fill="#181818" />
<circle cx="35" cy="185" r="3.6" fill="none" stroke="#c8c8c8" stroke-width="1.3"/>
<line x1="32.3" y1="187.8" x2="28" y2="192" stroke="#c8c8c8" stroke-width="1.4" />
<path d="M38.5,188.5 L42.5,188.5 L40.5,190.8 Z" fill="#c8c8c8" stroke="none" stroke-width="1" />
<rect x="19" y="204" width="218" height="17" fill="#2a2a2a" />
<line x1="19" y1="220.5" x2="237" y2="220.5" stroke="#1a1a1a" stroke-width="1" />
<path d="M20.5,209 L20.5,213 L26.5,219 L31.5,214 L25.5,208 L21.5,208 Z" fill="#cfcfcf" stroke="none" stroke-width="1" />
<circle cx="23" cy="210.5" r="1" fill="#2a2a2a"/>
<line x1="34.5" y1="207" x2="34.5" y2="218" stroke="#1a1a1a" stroke-width="1.2" />
<line x1="49.5" y1="207" x2="49.5" y2="218" stroke="#1a1a1a" stroke-width="1.2" />
<text x="55" y="215.5" font-size="10.5" fill="#bdbdbd" font-weight="normal" text-anchor="start" textLength="23.5" lengthAdjust="spacingAndGlyphs" stroke="#bdbdbd" stroke-width="0.3" >Name</text>
<line x1="19" y1="238.5" x2="219" y2="238.5" stroke="#2b2b2b" stroke-width="1" />
<rect x="20.5" y="226.5" width="9" height="9" fill="#c2ab8a" stroke="#111" stroke-width="0.8"/>
<rect x="50.5" y="224.5" width="15" height="13" fill="#d8d8d8" stroke="#111" stroke-width="0.6"/>
<rect x="51.5" y="225.5" width="1.2" height="1.6" fill="#555" />
<rect x="63.3" y="225.5" width="1.2" height="1.6" fill="#555" />
<rect x="51.5" y="228.5" width="1.2" height="1.6" fill="#555" />
<rect x="63.3" y="228.5" width="1.2" height="1.6" fill="#555" />
<rect x="51.5" y="231.5" width="1.2" height="1.6" fill="#555" />
<rect x="63.3" y="231.5" width="1.2" height="1.6" fill="#555" />
<rect x="51.5" y="234.5" width="1.2" height="1.6" fill="#555" />
<rect x="63.3" y="234.5" width="1.2" height="1.6" fill="#555" />
<circle cx="56" cy="229.5" r="2.2" fill="#1f8a55"/>
<rect x="57.5" y="229" width="5" height="5" fill="#c23a3a" />
<rect x="54" y="232" width="3" height="4" fill="#2a6a8a" />
<rect x="66.5" y="222" width="153" height="16" fill="#bcbcbc" />
<text x="68" y="234.4" font-size="11" fill="#101010" font-weight="normal" text-anchor="start" textLength="47" lengthAdjust="spacingAndGlyphs" stroke="#101010" stroke-width="0.35" >One Node</text>
<line x1="19" y1="256.5" x2="219" y2="256.5" stroke="#2b2b2b" stroke-width="1" />
<rect x="20.5" y="244.5" width="9" height="9" fill="#c2ab8a" stroke="#111" stroke-width="0.8"/>
<rect x="50.5" y="242.5" width="15" height="13" fill="#d8d8d8" stroke="#111" stroke-width="0.6"/>
<rect x="51.5" y="243.5" width="1.2" height="1.6" fill="#555" />
<rect x="63.3" y="243.5" width="1.2" height="1.6" fill="#555" />
<rect x="51.5" y="246.5" width="1.2" height="1.6" fill="#555" />
<rect x="63.3" y="246.5" width="1.2" height="1.6" fill="#555" />
<rect x="51.5" y="249.5" width="1.2" height="1.6" fill="#555" />
<rect x="63.3" y="249.5" width="1.2" height="1.6" fill="#555" />
<rect x="51.5" y="252.5" width="1.2" height="1.6" fill="#555" />
<rect x="63.3" y="252.5" width="1.2" height="1.6" fill="#555" />
<circle cx="56" cy="247.5" r="2.2" fill="#1f8a55"/>
<rect x="57.5" y="247" width="5" height="5" fill="#c23a3a" />
<rect x="54" y="250" width="3" height="4" fill="#2a6a8a" />
<text x="68" y="252.4" font-size="11" fill="#bdbdbd" font-weight="normal" text-anchor="start" textLength="91" lengthAdjust="spacingAndGlyphs" stroke="#bdbdbd" stroke-width="0.3" >One Node with Null</text>
<line x1="19" y1="274.5" x2="219" y2="274.5" stroke="#2b2b2b" stroke-width="1" />
<rect x="20.5" y="262.5" width="9" height="9" fill="#e6d56a" stroke="#111" stroke-width="0.8"/>
<path d="M39,263 L42,266 L39,269" fill="none" stroke="#c8c8c8" stroke-width="1.2" />
<path d="M51,262 L56,262 L57,263.5 L65,263.5 L65,272 L51,272 Z" fill="#cfcfcf" stroke="none" stroke-width="1" />
<text x="68" y="270.4" font-size="11" fill="#bdbdbd" font-weight="normal" text-anchor="start" textLength="53" lengthAdjust="spacingAndGlyphs" stroke="#bdbdbd" stroke-width="0.3" >Orig Comps</text>
<line x1="19" y1="292.5" x2="219" y2="292.5" stroke="#2b2b2b" stroke-width="1" />
<rect x="20.5" y="280.5" width="9" height="9" fill="#e6d56a" stroke="#111" stroke-width="0.8"/>
<path d="M39,281 L42,284 L39,287" fill="none" stroke="#c8c8c8" stroke-width="1.2" />
<path d="M51,280 L56,280 L57,281.5 L65,281.5 L65,290 L51,290 Z" fill="#cfcfcf" stroke="none" stroke-width="1" />
<text x="68" y="288.4" font-size="11" fill="#bdbdbd" font-weight="normal" text-anchor="start" textLength="26.4" lengthAdjust="spacingAndGlyphs" stroke="#bdbdbd" stroke-width="0.3" >Solids</text>
<line x1="19" y1="310.5" x2="219" y2="310.5" stroke="#2b2b2b" stroke-width="1" />
<rect x="20.5" y="298.5" width="9" height="9" fill="#e6d56a" stroke="#111" stroke-width="0.8"/>
<path d="M39,299 L42,302 L39,305" fill="none" stroke="#c8c8c8" stroke-width="1.2" />
<path d="M51,298 L56,298 L57,299.5 L65,299.5 L65,308 L51,308 Z" fill="#cfcfcf" stroke="none" stroke-width="1" />
<text x="68" y="306.4" font-size="11" fill="#bdbdbd" font-weight="normal" text-anchor="start" textLength="62.4" lengthAdjust="spacingAndGlyphs" stroke="#bdbdbd" stroke-width="0.3" >Source Assets</text>
<line x1="19" y1="328.5" x2="219" y2="328.5" stroke="#2b2b2b" stroke-width="1" />
<rect x="20.5" y="316.5" width="9" height="9" fill="#c2ab8a" stroke="#111" stroke-width="0.8"/>
<rect x="50.5" y="314.5" width="15" height="13" fill="#d8d8d8" stroke="#111" stroke-width="0.6"/>
<rect x="51.5" y="315.5" width="1.2" height="1.6" fill="#555" />
<rect x="63.3" y="315.5" width="1.2" height="1.6" fill="#555" />
<rect x="51.5" y="318.5" width="1.2" height="1.6" fill="#555" />
<rect x="63.3" y="318.5" width="1.2" height="1.6" fill="#555" />
<rect x="51.5" y="321.5" width="1.2" height="1.6" fill="#555" />
<rect x="63.3" y="321.5" width="1.2" height="1.6" fill="#555" />
<rect x="51.5" y="324.5" width="1.2" height="1.6" fill="#555" />
<rect x="63.3" y="324.5" width="1.2" height="1.6" fill="#555" />
<circle cx="56" cy="319.5" r="2.2" fill="#1f8a55"/>
<rect x="57.5" y="319" width="5" height="5" fill="#c23a3a" />
<rect x="54" y="322" width="3" height="4" fill="#2a6a8a" />
<text x="68" y="324.4" font-size="11" fill="#bdbdbd" font-weight="normal" text-anchor="start" textLength="46.4" lengthAdjust="spacingAndGlyphs" stroke="#bdbdbd" stroke-width="0.3" >Two Node</text>
<rect x="224.5" y="223.5" width="5" height="4" fill="#d0d0d0" />
<rect x="220.5" y="231" width="5" height="4" fill="#d0d0d0" />
<rect x="229" y="231" width="5" height="4" fill="#d0d0d0" />
<path d="M227,227.5 L227,229.5 L223,229.5 L223,231 M227,229.5 L231.5,229.5 L231.5,231" fill="none" stroke="#d0d0d0" stroke-width="1" />
<rect x="19" y="550" width="218" height="18" fill="#1f1f1f" />
<rect x="112" y="552" width="40" height="14" fill="#1a1a1a" />
<text x="118" y="562.5" font-size="10" fill="#c8c8c8" font-weight="normal" text-anchor="start" textLength="26" lengthAdjust="spacingAndGlyphs" stroke="#c8c8c8" stroke-width="0.3" >32 bpc</text>
<rect x="25.5" y="553.5" width="10" height="7" fill="none" stroke="#c8c8c8" stroke-width="1.3"/>
<line x1="28" y1="557" x2="34" y2="557" stroke="#c8c8c8" stroke-width="1.2" />
<path d="M22,556 L22,563.5 L32,563.5" fill="none" stroke="#c8c8c8" stroke-width="1.3" />
<path d="M44,553 L48.5,553 L49.5,554.5 L56,554.5 L56,563.5 L44,563.5 Z" fill="#cfcfcf" stroke="none" stroke-width="1" />
<rect x="65.5" y="552.5" width="16" height="12" fill="#d8d8d8" />
<circle cx="71" cy="557" r="2.2" fill="#1f8a55"/>
<rect x="72.5" y="556.5" width="5" height="5" fill="#c23a3a" />
<rect x="69" y="559" width="3" height="4" fill="#2a6a8a" />
<path d="M91,561 L98,554 M94,563 L101,556" fill="none" stroke="#777" stroke-width="1.6" />
<path d="M102,557.5 A3.8,3.8 0 1 0 106,557.5" fill="none" stroke="#c8c8c8" stroke-width="1.3"/>
<line x1="104" y1="555" x2="104" y2="559.5" stroke="#c8c8c8" stroke-width="1.3" />
<rect x="160" y="555.5" width="8" height="9" fill="none" stroke="#c8c8c8" stroke-width="1.3"/>
<line x1="158.5" y1="554.5" x2="169.5" y2="554.5" stroke="#c8c8c8" stroke-width="1.3" />
<rect x="162" y="552.5" width="4" height="1.5" fill="#c8c8c8" />
<line x1="162.7" y1="557" x2="162.7" y2="563" stroke="#c8c8c8" stroke-width="0.9" />
<line x1="165.3" y1="557" x2="165.3" y2="563" stroke="#c8c8c8" stroke-width="0.9" />
<rect x="177.5" y="552.5" width="24" height="14" fill="#3a3a3a" rx="7"/>
<rect x="204" y="551" width="16" height="16" fill="#262626" />
<rect x="221" y="551" width="16" height="16" fill="#292929" />
<rect x="241" y="48" width="927" height="48" fill="#282828" />
<path d="M250.5,58 L256,63.5 M256,58 L250.5,63.5" fill="none" stroke="#bdbdbd" stroke-width="1.1" />
<rect x="265.5" y="55.5" width="9" height="9" fill="#c2ab8a" stroke="#111" stroke-width="0.8"/>
<path d="M285,58 L285,55.5 A3,3 0 0 1 291,55.5" fill="none" stroke="#d0d0d0" stroke-width="1.4" />
<rect x="284" y="58.5" width="8.5" height="5.5" fill="#d0d0d0" />
<rect x="287.5" y="60" width="1.5" height="2.5" fill="#262626" />
<text x="300" y="64.2" font-size="11" fill="#c0c0c0" font-weight="normal" text-anchor="start" textLength="58" lengthAdjust="spacingAndGlyphs" stroke="#c0c0c0" stroke-width="0.3" >Composition</text>
<text x="362" y="64.2" font-size="11" fill="#5b9ee8" font-weight="normal" text-anchor="start" textLength="46" lengthAdjust="spacingAndGlyphs" stroke="#5b9ee8" stroke-width="0.3" >One Node</text>
<line x1="415" y1="57.5" x2="423" y2="57.5" stroke="#c8c8c8" stroke-width="1.2" />
<line x1="415" y1="60.8" x2="423" y2="60.8" stroke="#c8c8c8" stroke-width="1.2" />
<line x1="415" y1="64.1" x2="423" y2="64.1" stroke="#c8c8c8" stroke-width="1.2" />
<rect x="251" y="70.5" width="172" height="1.8" fill="#d0d0d0" />
<text x="457" y="64.2" font-size="11" fill="#bdbdbd" font-weight="normal" text-anchor="start" textLength="58" lengthAdjust="spacingAndGlyphs" stroke="#bdbdbd" stroke-width="0.3" >Layer (none)</text>
<rect x="582.5" y="55.5" width="9" height="9" fill="#c6c6e6" stroke="#111" stroke-width="0.8"/>
<text x="601" y="64.2" font-size="11" fill="#bdbdbd" font-weight="normal" text-anchor="start" textLength="319" lengthAdjust="spacingAndGlyphs" stroke="#bdbdbd" stroke-width="0.3" >Footage foreground hills 20/Fantasy_land_by_Lidia_Lukianova_01.ai</text>
<rect x="260" y="77" width="75" height="15" fill="#1c1c1c" />
<text x="267" y="88.3" font-size="11" fill="#5b9ee8" font-weight="normal" text-anchor="start" textLength="46" lengthAdjust="spacingAndGlyphs" stroke="#5b9ee8" stroke-width="0.3" >One Node</text>
<path d="M330.5,81 L327.5,84.5 L330.5,88" fill="none" stroke="#5b9ee8" stroke-width="1.2" />
<text x="344" y="88.3" font-size="11" fill="#bdbdbd" font-weight="normal" text-anchor="start" textLength="55" lengthAdjust="spacingAndGlyphs" stroke="#bdbdbd" stroke-width="0.3" >Background</text>
<text x="1053" y="88.3" font-size="11" fill="#bdbdbd" font-weight="normal" text-anchor="start" textLength="45" lengthAdjust="spacingAndGlyphs" stroke="#bdbdbd" stroke-width="0.3" >Renderer:</text>
<rect x="1101" y="77" width="62" height="15" fill="#1d1d1d" />
<text x="1108" y="88.3" font-size="11" fill="#c8c8c8" font-weight="normal" text-anchor="start" textLength="47" lengthAdjust="spacingAndGlyphs" stroke="#c8c8c8" stroke-width="0.3" >Classic 3D</text>
<rect x="241" y="96" width="927" height="449" fill="#232323" />
<line x1="241" y1="95.5" x2="1168" y2="95.5" stroke="#1a1a1a" stroke-width="1" />
<rect x="240.5" y="47.5" width="928" height="519" fill="none" stroke="#46699c" stroke-width="1.4"/>
<path d="M242,97 L252,97 L242,107 Z" fill="#3d8ced" stroke="none" stroke-width="1" />
<path d="M704,97 L694,97 L704,107 Z" fill="#3d8ced" stroke="none" stroke-width="1" />
<path d="M242,544 L252,544 L242,534 Z" fill="#3d8ced" stroke="none" stroke-width="1" />
<path d="M704,544 L694,544 L704,534 Z" fill="#3d8ced" stroke="none" stroke-width="1" />
<text x="251" y="118.5" font-size="11.5" fill="#ececec" font-weight="bold" text-anchor="start" textLength="19" lengthAdjust="spacingAndGlyphs" >Top</text>
<line x1="242" y1="135.5" x2="704" y2="135.5" stroke="#8c7440" stroke-width="1.2" />
<line x1="242" y1="168" x2="704" y2="168" stroke="#5e5e9a" stroke-width="2" />
<line x1="242" y1="194" x2="704" y2="194" stroke="#8c7440" stroke-width="1.5" />
<line x1="242" y1="205.5" x2="704" y2="205.5" stroke="#5f5f6e" stroke-width="1.4" />
<line x1="242" y1="338.5" x2="704" y2="338.5" stroke="#5a5a92" stroke-width="1.8" />
<line x1="242" y1="347" x2="552" y2="347" stroke="#a06a82" stroke-width="1" />
<line x1="328" y1="399.5" x2="667" y2="399.5" stroke="#a06a82" stroke-width="1" />
<defs><pattern id="chk" x="383.5" y="189" width="15" height="15" patternUnits="userSpaceOnUse"><rect width="15" height="15" fill="#ffffff"/><rect width="7.5" height="7.5" fill="#cdcdcd"/><rect x="7.5" y="7.5" width="7.5" height="7.5" fill="#cdcdcd"/></pattern></defs>
<rect x="376" y="189" width="226.5" height="127" fill="url(#chk)" />
<line x1="376" y1="194" x2="602" y2="194" stroke="#a8a070" stroke-width="1" stroke-dasharray="2 2"/>
<line x1="602" y1="316" x2="625" y2="316" stroke="#c0a0a8" stroke-width="1" />
<line x1="399.8" y1="315.7" x2="511.8" y2="532.7" stroke="#b07088" stroke-width="1" />
<line x1="625" y1="315.7" x2="511.8" y2="532.7" stroke="#b07088" stroke-width="1" />
<path d="M625.5,312.5 L628.5,315.7 L625.5,319 L622.5,315.7 Z" fill="#e8d0d8" stroke="none" stroke-width="1" />
<rect x="364" y="533.5" width="147" height="3" fill="#ecccd4" />
<line x1="364" y1="533" x2="511" y2="533" stroke="#3a2a2e" stroke-width="0.6" />
<rect x="355" y="531.5" width="9" height="9" fill="#f0c8d4" />
<path d="M512,522 L509.5,530 L514.5,530 Z" fill="#2a2a8a" stroke="none" stroke-width="1" />
<line x1="512" y1="528" x2="512" y2="534" stroke="#2a2a8a" stroke-width="1.5" />
<line x1="515" y1="535.5" x2="524" y2="535.5" stroke="#c02020" stroke-width="1.3" />
<rect x="508.5" y="530" width="6" height="10" fill="none" stroke="#e8e8e8" stroke-width="1"/>
<rect x="510" y="534" width="3" height="3" fill="#40a040" />
<rect x="704.5" y="96" width="15.5" height="449" fill="#0a0a0a" />
<line x1="719.5" y1="97" x2="719.5" y2="545" stroke="#e0e0e0" stroke-width="1.2" />
<line x1="712.5" y1="98" x2="712.5" y2="110" stroke="#777" stroke-width="0.8" />
<line x1="706" y1="104.5" x2="718" y2="104.5" stroke="#777" stroke-width="0.8" />
<rect x="720" y="96" width="448" height="16" fill="#0a0a0a" />
<line x1="705" y1="111.5" x2="1168" y2="111.5" stroke="#e0e0e0" stroke-width="1.2" />
<rect x="720.5" y="112.5" width="447.5" height="432.5" fill="#232323" />
<text x="729" y="132.5" font-size="11.5" fill="#ececec" font-weight="normal" text-anchor="start" textLength="72" lengthAdjust="spacingAndGlyphs" stroke="#ececec" stroke-width="0.3" >Active Camera</text>
<line x1="721" y1="163.5" x2="1168" y2="163.5" stroke="#6060a8" stroke-width="1.8" />
<line x1="721" y1="169" x2="1168" y2="169" stroke="#7a6538" stroke-width="1.4" stroke-dasharray="1.5 1"/>
<line x1="721" y1="173.5" x2="1168" y2="173.5" stroke="#8a7540" stroke-width="1.4" stroke-dasharray="1.5 1"/>
<line x1="721" y1="178" x2="1168" y2="178" stroke="#7a6538" stroke-width="1.4" stroke-dasharray="1.5 1"/>
<line x1="721" y1="190.5" x2="1168" y2="190.5" stroke="#6a5030" stroke-width="1.4" stroke-dasharray="1.5 1"/>
<line x1="721" y1="461.2" x2="1168" y2="461.2" stroke="#5a3a58" stroke-width="1.2" />
<line x1="721" y1="465" x2="1168" y2="465" stroke="#7a6538" stroke-width="1.2" stroke-dasharray="1.5 1"/>
<line x1="721" y1="468" x2="1168" y2="468" stroke="#7a6538" stroke-width="1.2" stroke-dasharray="1.5 1"/>
<line x1="721" y1="475.8" x2="1168" y2="475.8" stroke="#3c4444" stroke-width="3" stroke-dasharray="1.5 1"/>
<line x1="721" y1="482.2" x2="1168" y2="482.2" stroke="#7a6538" stroke-width="1.2" stroke-dasharray="1.5 1"/>
<line x1="721" y1="484.6" x2="1168" y2="484.6" stroke="#6a5a38" stroke-width="1.2" stroke-dasharray="1.5 1"/>
<line x1="721" y1="495.8" x2="1168" y2="495.8" stroke="#6a5aa8" stroke-width="2" />
<line x1="721" y1="501" x2="1168" y2="501" stroke="#4a4a5a" stroke-width="1" stroke-dasharray="1.5 1"/>
<g transform="translate(724,205)"><g transform="translate(-724,-205)" clip-path="url(#lc)"><rect x="724" y="205" width="440" height="249" fill="url(#gsky)"/><path d="M724,256 C735,256 745,258 752,262 L752,290 L724,290 Z" fill="#f6863a" /><path d="M724,270 C780,262 860,262 930,275 C960,270 990,262 1010,276 L1010,320 L724,320 Z" fill="#ef3e66" /><path d="M724,262 C738,259 748,256 760,250 C775,243 785,240 795,240 C806,240 815,246 826,258 C836,256 850,256 862,258 C875,262 887,263 897,258 C910,251 925,242 940,240 C955,237 970,236 985,238 C995,240 1003,244 1010,246 L1010,262 C990,262 970,268 953,273 C935,281 920,289 905,287 C890,285 878,277 868,268 C860,264 850,265 840,266 C828,268 820,272 805,274 C790,268 775,263 760,265 C745,267 735,272 724,276 Z" fill="url(#gy)" /><path d="M724,276 C735,272 745,267 760,265 C775,263 790,268 805,274 C815,282 825,290 835,300 L835,330 L724,330 Z" fill="url(#gol)" /><path d="M924,283 C935,280 950,272 965,268 C980,264 992,258 1000,252 C1010,244 1020,232 1033,228 C1045,228 1055,238 1071,255 C1080,263 1090,268 1105,270 C1120,272 1132,276 1141,281 C1150,286 1158,290 1164,295 L1164,340 L924,340 Z" fill="url(#go)" /><path d="M868,268 C878,277 890,285 905,287 C915,288 920,285 924,283 C945,288 965,292 987,297 C992,310 995,320 996,330 L868,330 Z" fill="#ef3a68" /><path d="M984,300 C995,290 1008,276 1022,272 C1032,272 1042,278 1050,288 C1058,298 1066,308 1080,318 L1090,330 L984,330 Z" fill="url(#gc)" /><path d="M1060,326 C1080,314 1105,308 1133,307 C1145,306 1152,308 1158,309 L1164,309 L1164,330 L1060,330 Z" fill="#f25a5a" /><path d="M1145,320 C1152,312 1158,305 1164,302 L1164,330 L1140,330 Z" fill="#f89a20" /><path d="M1143,283 C1150,283 1158,283 1164,282 L1164,294 C1157,290 1150,286 1143,283 Z" fill="#9a2ac0" /><path d="M724,302 C740,305 750,309 760,311 L790,300 L829,273 L868,293 L880,302 L913,295 L935,311 L971,296 L993,313 C1010,318 1025,322 1045,326 L1045,345 L724,345 Z" fill="#7412d8" /><path d="M760,311 L829,273 L868,293 L890,310 L860,330 L770,330 Z" fill="#5a0cc0" /><path d="M760,311 C772,305 785,297 795,291 C808,284 820,278 829,273 C826,278 822,283 818,288 C812,294 806,298 798,301 C788,305 776,308 760,311 Z" fill="#c8a8f4" /><path d="M893,305 C900,302 908,298 913,295 C911,302 906,306 900,310 Z" fill="#c8a8f4" /><path d="M945,306 C955,303 965,299 971,296 C968,303 962,307 955,311 Z" fill="#c8a8f4" /><path d="M740,345 C742,334 752,321 765,318 C772,313 782,311 789,313 C795,317 800,318 805,316 C812,311 820,310 825,313 C833,318 840,314 847,314 C853,314 857,318 860,320 C870,319 880,320 890,322 L905,322 L905,345 Z" fill="#0e6a5a" /><path d="M880,320 L1040,324 L1040,340 L880,340 Z" fill="#0e6a5a" /><circle cx="879.5" cy="300" r="13" fill="#18a08c" /><path d="M866.5,300 A13,13 0 0 1 892.5,299 C885,301 876,306 866.5,300 Z" fill="#70e4dc" /><ellipse cx="879.5" cy="299" rx="28" ry="4.8" fill="none" stroke="#40d0d0" stroke-width="2.6" transform="rotate(-19 879.5 299)"/><path d="M866.5,300 A13,13 0 0 0 892.5,301 C885,303 876,307 866.5,300 Z" fill="#18a08c" /><path d="M724,342 L905,342 L905,356 L724,356 Z" fill="#4aa07c" /><path d="M724,322 C735,326 755,338 769,350 L724,350 Z" fill="#5a0ab8" /><path d="M894.7,334 L920,334 L920,353 L894.7,353 Z" fill="#a01aa8" /><path d="M896,353 L898,338 L900,353 Z" fill="#c030b8" /><path d="M900,353 L902,338 L904,353 Z" fill="#c030b8" /><path d="M904,353 L906,338 L908,353 Z" fill="#c030b8" /><path d="M908,353 L910,338 L912,353 Z" fill="#c030b8" /><path d="M912,353 L914,338 L916,353 Z" fill="#c030b8" /><path d="M916,353 L918,338 L920,353 Z" fill="#c030b8" /><path d="M932.7,330 L970.7,330 L970.7,358 L932.7,358 Z" fill="#b82cb8" /><path d="M919.3,333 L926,326.7 L932.7,333 L932.7,356.7 L919.3,356.7 Z" fill="#d45ad4" /><path d="M925,326.7 L970.7,326.7 L970.7,334 L932.7,334 Z" fill="#f28040" /><path d="M936,358 L966.7,358 L962,368.7 L940,368.7 Z" fill="#ee5a7c" /><path d="M932.7,318 L946.7,318 L946.7,330 L932.7,330 Z" fill="#c840c0" /><path d="M932.7,318.7 L939.3,307.3 L946.7,318.7 Z" fill="#f07a3a" /><path d="M970.7,324.7 L980,324.7 L980,351.3 L970.7,351.3 Z" fill="#9a1a9a" /><path d="M980,318 L993.3,318 L993.3,348.7 L980,348.7 Z" fill="#c438c0" /><path d="M980,318.7 L986.7,308 L993.3,318.7 Z" fill="#f07a3a" /><path d="M993.3,334 L1013.3,334 L1013.3,346 L993.3,346 Z" fill="#b02aae" /><rect x="934" y="337" width="35" height="1.6" fill="#8a1890"/><rect x="934" y="343" width="35" height="1.6" fill="#8a1890"/><rect x="934" y="349" width="35" height="1.6" fill="#8a1890"/><rect x="922" y="331" width="2" height="2" fill="#7a1a80"/><rect x="922" y="339" width="2" height="2" fill="#7a1a80"/><path d="M724,353 C760,352 800,353 840,356 C870,358 895,354 920,353 C935,356 945,362 955,369 L955,420 L724,420 Z" fill="#1f9a4a" /><path d="M940,372 C955,368 965,358 975,352 C990,347 1000,346 1013,341 C1022,336 1030,330 1040,327 L1164,327 L1164,454 L940,454 Z" fill="#167a2c" /><path d="M1062,327 C1080,332 1092,348 1110,355 C1130,358 1148,340 1162,327 Z" fill="#4aa47e" /><path d="M1155,330 L1164,327 L1164,345 Z" fill="#167a2c" /><circle cx="1052" cy="300" r="11.5" fill="#4ab040" /><circle cx="1041" cy="310.5" r="5.5" fill="#167a30" /><circle cx="1064" cy="304" r="4.5" fill="#167a30" /><circle cx="1046" cy="306" r="5" fill="#1a8a34" /><path d="M1050,310 L1054,310 L1053,326 L1051,326 Z" fill="#7a3a2a" /><ellipse cx="1041" cy="323" rx="4" ry="2.5" fill="#f0e0d0" transform="rotate(0 1041 323)"/><ellipse cx="1050" cy="326" rx="2.5" ry="2.5" fill="#3a8ac0" transform="rotate(0 1050 326)"/><path d="M1053,319 L1059,316 L1061,321 L1056,324 Z" fill="#f8d040" /><path d="M724,385 C760,384 790,388 823,383 C850,385 880,380 940,372 L960,454 L724,454 Z" fill="#157234" /><path d="M812,362 C812,357 820,356 822,362 L823,375 L810,376 Z" fill="#f4f0f0" /><circle cx="817" cy="356.5" r="3.2" fill="#f0a040" /><path d="M804,376 L826,374 L826,380 L804,381 Z" fill="#8a48c8" /><path d="M839,361 C840,352 856,351 857,361 L858,376 L838,377 Z" fill="#f0902a" /><path d="M844,350 C844,346 852,346 853,351 L853,358 L845,356 Z" fill="#2a1a12" /><ellipse cx="849" cy="370" rx="7" ry="5" fill="#e0402a" transform="rotate(0 849 370)"/><path d="M836,377 L860,375 L859,381 L836,382 Z" fill="#8a48c8" /><path d="M886,361 C886,355 899,355 899,361 L900,378 L886,378 Z" fill="#b040c8" /><circle cx="892.5" cy="356" r="3" fill="#f0a040" /><path d="M866,368 C870,362 880,362 884,368 L886,379 L866,380 Z" fill="#4a3a8a" /><path d="M757,377 C770,382 782,390 791,402 C778,398 765,390 757,377 Z" fill="#0a4a38" /><path d="M752.5,391.7 C766,394 778,398 786,402 C798,410 806,418 809,425 C812,435 812,445 811.5,455 L803,455 C804,445 803,432 801,424 C796,414 790,410 783.5,406.4 C773,400 762,396 752.5,391.7 Z" fill="#6ad030" /><path d="M790.8,387 C805,392 815,398 823,402 C836,410 845,418 849,425 C854,435 856,445 855.8,455 L846,455 C846,445 843,432 838,423 C832,415 825,410 816,406.4 C806,400 797,394 790.8,387 Z" fill="#74dc3a" /><path d="M823,368 C832,375 840,385 845.5,403.5 C838,398 830,390 826,382 C824,378 823,372 823,368 Z" fill="#7ae040" /><path d="M828,372 C834,382 840,392 843,400" fill="none" stroke="#3a9a2a" stroke-width="0.8"/><path d="M883,370 C892,385 897,400 896,420 C890,410 884,395 883,370 Z" fill="#0a4a3a" /><path d="M915,377 C912,392 905,408 891,423 C892,408 900,390 915,377 Z" fill="#6ad020" /><path d="M911,374 C925,385 935,400 939,414 C928,405 918,392 911,374 Z" fill="#0e5a38" /><path d="M724,430 C732,436 738,446 741,455 L735,455 C733,447 729,440 724,436 Z" fill="#58c030" /><path d="M762,412 C772,420 782,435 786,455 L779,455 C776,438 770,424 762,412 Z" fill="#0a4a38" /><ellipse cx="776" cy="417" rx="3.6" ry="1.5" fill="#58b840" transform="rotate(-40 776 417)"/><ellipse cx="785" cy="415" rx="3.6" ry="1.5" fill="#58b840" transform="rotate(40 785 415)"/><ellipse cx="779" cy="422" rx="3.6" ry="1.5" fill="#58b840" transform="rotate(-40 779 422)"/><ellipse cx="788" cy="420" rx="3.6" ry="1.5" fill="#58b840" transform="rotate(40 788 420)"/><ellipse cx="782" cy="427" rx="3.6" ry="1.5" fill="#58b840" transform="rotate(-40 782 427)"/><ellipse cx="791" cy="425" rx="3.6" ry="1.5" fill="#58b840" transform="rotate(40 791 425)"/><ellipse cx="785" cy="432" rx="3.6" ry="1.5" fill="#58b840" transform="rotate(-40 785 432)"/><ellipse cx="794" cy="430" rx="3.6" ry="1.5" fill="#58b840" transform="rotate(40 794 430)"/><ellipse cx="788" cy="437" rx="3.6" ry="1.5" fill="#58b840" transform="rotate(-40 788 437)"/><ellipse cx="797" cy="435" rx="3.6" ry="1.5" fill="#58b840" transform="rotate(40 797 435)"/><ellipse cx="791" cy="442" rx="3.6" ry="1.5" fill="#58b840" transform="rotate(-40 791 442)"/><ellipse cx="800" cy="440" rx="3.6" ry="1.5" fill="#58b840" transform="rotate(40 800 440)"/><ellipse cx="829.8" cy="424.0" rx="8" ry="2.4" fill="#e02a62" transform="rotate(0 829.8 424.0)"/><ellipse cx="829.0" cy="427.0" rx="8" ry="2.4" fill="#e02a62" transform="rotate(26 829.0 427.0)"/><ellipse cx="826.8" cy="429.5" rx="8" ry="2.4" fill="#e02a62" transform="rotate(51 826.8 429.5)"/><ellipse cx="823.6" cy="430.8" rx="8" ry="2.4" fill="#e02a62" transform="rotate(77 823.6 430.8)"/><ellipse cx="820.0" cy="430.8" rx="8" ry="2.4" fill="#e02a62" transform="rotate(103 820.0 430.8)"/><ellipse cx="816.8" cy="429.5" rx="8" ry="2.4" fill="#e02a62" transform="rotate(129 816.8 429.5)"/><ellipse cx="814.6" cy="427.0" rx="8" ry="2.4" fill="#e02a62" transform="rotate(154 814.6 427.0)"/><ellipse cx="813.8" cy="424.0" rx="8" ry="2.4" fill="#e02a62" transform="rotate(180 813.8 424.0)"/><ellipse cx="814.6" cy="421.0" rx="8" ry="2.4" fill="#e02a62" transform="rotate(206 814.6 421.0)"/><ellipse cx="816.8" cy="418.5" rx="8" ry="2.4" fill="#e02a62" transform="rotate(231 816.8 418.5)"/><ellipse cx="820.0" cy="417.2" rx="8" ry="2.4" fill="#e02a62" transform="rotate(257 820.0 417.2)"/><ellipse cx="823.6" cy="417.2" rx="8" ry="2.4" fill="#e02a62" transform="rotate(283 823.6 417.2)"/><ellipse cx="826.8" cy="418.5" rx="8" ry="2.4" fill="#e02a62" transform="rotate(309 826.8 418.5)"/><ellipse cx="829.0" cy="421.0" rx="8" ry="2.4" fill="#e02a62" transform="rotate(334 829.0 421.0)"/><circle cx="821.8" cy="424" r="3" fill="#f8a040" /><ellipse cx="764.0" cy="405.0" rx="6" ry="2.2" fill="#d82a58" transform="rotate(0 764.0 405.0)"/><ellipse cx="764.5" cy="403.1" rx="6" ry="2.2" fill="#d82a58" transform="rotate(22 764.5 403.1)"/><ellipse cx="765.8" cy="401.5" rx="6" ry="2.2" fill="#d82a58" transform="rotate(45 765.8 401.5)"/><ellipse cx="767.7" cy="400.4" rx="6" ry="2.2" fill="#d82a58" transform="rotate(68 767.7 400.4)"/><ellipse cx="770.0" cy="400.0" rx="6" ry="2.2" fill="#d82a58" transform="rotate(90 770.0 400.0)"/><ellipse cx="772.3" cy="400.4" rx="6" ry="2.2" fill="#d82a58" transform="rotate(112 772.3 400.4)"/><ellipse cx="774.2" cy="401.5" rx="6" ry="2.2" fill="#d82a58" transform="rotate(135 774.2 401.5)"/><ellipse cx="775.5" cy="403.1" rx="6" ry="2.2" fill="#d82a58" transform="rotate(158 775.5 403.1)"/><ellipse cx="776.0" cy="405.0" rx="6" ry="2.2" fill="#d82a58" transform="rotate(180 776.0 405.0)"/><ellipse cx="779" cy="410" rx="2.5" ry="4.5" fill="#f07a30" transform="rotate(30 779 410)"/><path d="M1038.5,375 C1038.5,369 1049,369 1049,375 L1049,400 C1047,404 1040,404 1038.5,400 Z" fill="#e02a5a" /><path d="M1046,402 L1046,455" stroke="#0a4a30" stroke-width="1.2"/><path d="M935,402 L941,409 L946,402 L948,410 L953.7,404 L950,414 L942,417 L936,412 Z" fill="#f06a30" /><ellipse cx="732.5" cy="371" rx="6" ry="7.5" fill="#e060b0" transform="rotate(10 732.5 371)"/><ellipse cx="830" cy="446" rx="3" ry="5" fill="#f07a30" transform="rotate(-20 830 446)"/><ellipse cx="824" cy="440" rx="2.5" ry="4" fill="#f07a30" transform="rotate(20 824 440)"/><ellipse cx="957.1" cy="442.7" rx="7.7" ry="3.4" fill="#2eb4bc" transform="rotate(0 957.1 442.7)"/><ellipse cx="955.3" cy="448.2" rx="7.7" ry="3.4" fill="#2eb4bc" transform="rotate(36 955.3 448.2)"/><ellipse cx="950.6" cy="451.6" rx="7.7" ry="3.4" fill="#2eb4bc" transform="rotate(72 950.6 451.6)"/><ellipse cx="944.8" cy="451.6" rx="7.7" ry="3.4" fill="#2eb4bc" transform="rotate(108 944.8 451.6)"/><ellipse cx="940.1" cy="448.2" rx="7.7" ry="3.4" fill="#2eb4bc" transform="rotate(144 940.1 448.2)"/><ellipse cx="938.4" cy="442.7" rx="7.7" ry="3.4" fill="#2eb4bc" transform="rotate(180 938.4 442.7)"/><ellipse cx="940.1" cy="437.2" rx="7.7" ry="3.4" fill="#2eb4bc" transform="rotate(216 940.1 437.2)"/><ellipse cx="944.8" cy="433.8" rx="7.7" ry="3.4" fill="#2eb4bc" transform="rotate(252 944.8 433.8)"/><ellipse cx="950.6" cy="433.8" rx="7.7" ry="3.4" fill="#2eb4bc" transform="rotate(288 950.6 433.8)"/><ellipse cx="955.3" cy="437.2" rx="7.7" ry="3.4" fill="#2eb4bc" transform="rotate(324 955.3 437.2)"/><circle cx="947.7" cy="442.7" r="3.06" fill="#c0f8f8" /><ellipse cx="1131.0" cy="424.6" rx="5.8" ry="2.6" fill="#2aacb0" transform="rotate(0 1131.0 424.6)"/><ellipse cx="1129.7" cy="428.7" rx="5.8" ry="2.6" fill="#2aacb0" transform="rotate(36 1129.7 428.7)"/><ellipse cx="1126.2" cy="431.3" rx="5.8" ry="2.6" fill="#2aacb0" transform="rotate(72 1126.2 431.3)"/><ellipse cx="1121.8" cy="431.3" rx="5.8" ry="2.6" fill="#2aacb0" transform="rotate(108 1121.8 431.3)"/><ellipse cx="1118.3" cy="428.7" rx="5.8" ry="2.6" fill="#2aacb0" transform="rotate(144 1118.3 428.7)"/><ellipse cx="1117.0" cy="424.6" rx="5.8" ry="2.6" fill="#2aacb0" transform="rotate(180 1117.0 424.6)"/><ellipse cx="1118.3" cy="420.5" rx="5.8" ry="2.6" fill="#2aacb0" transform="rotate(216 1118.3 420.5)"/><ellipse cx="1121.8" cy="417.9" rx="5.8" ry="2.6" fill="#2aacb0" transform="rotate(252 1121.8 417.9)"/><ellipse cx="1126.2" cy="417.9" rx="5.8" ry="2.6" fill="#2aacb0" transform="rotate(288 1126.2 417.9)"/><ellipse cx="1129.7" cy="420.5" rx="5.8" ry="2.6" fill="#2aacb0" transform="rotate(324 1129.7 420.5)"/><circle cx="1124" cy="424.6" r="2.304" fill="#c0f8f8" /><ellipse cx="924.0" cy="412.7" rx="3.0" ry="1.3" fill="#a8dcf4" transform="rotate(0 924.0 412.7)"/><ellipse cx="922.9" cy="415.3" rx="3.0" ry="1.3" fill="#a8dcf4" transform="rotate(45 922.9 415.3)"/><ellipse cx="920.3" cy="416.4" rx="3.0" ry="1.3" fill="#a8dcf4" transform="rotate(90 920.3 416.4)"/><ellipse cx="917.7" cy="415.3" rx="3.0" ry="1.3" fill="#a8dcf4" transform="rotate(135 917.7 415.3)"/><ellipse cx="916.6" cy="412.7" rx="3.0" ry="1.3" fill="#a8dcf4" transform="rotate(180 916.6 412.7)"/><ellipse cx="917.7" cy="410.1" rx="3.0" ry="1.3" fill="#a8dcf4" transform="rotate(225 917.7 410.1)"/><ellipse cx="920.3" cy="409.0" rx="3.0" ry="1.3" fill="#a8dcf4" transform="rotate(270 920.3 409.0)"/><ellipse cx="922.9" cy="410.1" rx="3.0" ry="1.3" fill="#a8dcf4" transform="rotate(315 922.9 410.1)"/><circle cx="920.3" cy="412.7" r="1.206" fill="#8a6ac8" /><ellipse cx="1000.7" cy="415.3" rx="3.0" ry="1.3" fill="#a8dcf4" transform="rotate(0 1000.7 415.3)"/><ellipse cx="999.6" cy="417.9" rx="3.0" ry="1.3" fill="#a8dcf4" transform="rotate(45 999.6 417.9)"/><ellipse cx="997.0" cy="419.0" rx="3.0" ry="1.3" fill="#a8dcf4" transform="rotate(90 997.0 419.0)"/><ellipse cx="994.4" cy="417.9" rx="3.0" ry="1.3" fill="#a8dcf4" transform="rotate(135 994.4 417.9)"/><ellipse cx="993.3" cy="415.3" rx="3.0" ry="1.3" fill="#a8dcf4" transform="rotate(180 993.3 415.3)"/><ellipse cx="994.4" cy="412.7" rx="3.0" ry="1.3" fill="#a8dcf4" transform="rotate(225 994.4 412.7)"/><ellipse cx="997.0" cy="411.6" rx="3.0" ry="1.3" fill="#a8dcf4" transform="rotate(270 997.0 411.6)"/><ellipse cx="999.6" cy="412.7" rx="3.0" ry="1.3" fill="#a8dcf4" transform="rotate(315 999.6 412.7)"/><circle cx="997" cy="415.3" r="1.206" fill="#8a6ac8" /><ellipse cx="729" cy="410" rx="5" ry="7.5" fill="#3ad8d8" transform="rotate(20 729 410)"/><ellipse cx="728.5" cy="424" rx="5" ry="4.5" fill="#3ad8d8" transform="rotate(-20 728.5 424)"/><ellipse cx="731" cy="450" rx="6" ry="4.5" fill="#3ad8d8" transform="rotate(0 731 450)"/><ellipse cx="750" cy="425" rx="5" ry="5.5" fill="#3ad8d8" transform="rotate(30 750 425)"/><ellipse cx="754" cy="450" rx="6" ry="4.5" fill="#3ad8d8" transform="rotate(-10 754 450)"/><ellipse cx="893" cy="418" rx="4" ry="6" fill="#3ad8d8" transform="rotate(-20 893 418)"/><ellipse cx="899" cy="432" rx="5" ry="5.5" fill="#3ad8d8" transform="rotate(20 899 432)"/><ellipse cx="880" cy="427" rx="3" ry="4" fill="#3ad8d8" transform="rotate(30 880 427)"/><ellipse cx="904" cy="446" rx="5" ry="4" fill="#3ad8d8" transform="rotate(10 904 446)"/><ellipse cx="880" cy="445" rx="4" ry="3" fill="#3ad8d8" transform="rotate(-30 880 445)"/><ellipse cx="975" cy="428" rx="2.5" ry="4" fill="#3ad8d8" transform="rotate(20 975 428)"/><ellipse cx="985" cy="435" rx="2.5" ry="4" fill="#3ad8d8" transform="rotate(-20 985 435)"/><ellipse cx="996" cy="420" rx="2.5" ry="3.5" fill="#3ad8d8" transform="rotate(30 996 420)"/><ellipse cx="1005" cy="431" rx="2.5" ry="3.5" fill="#3ad8d8" transform="rotate(-30 1005 431)"/><ellipse cx="1010" cy="438" rx="3" ry="2.2" fill="#3ad8d8" transform="rotate(10 1010 438)"/><ellipse cx="1004" cy="450" rx="2.5" ry="3.5" fill="#3ad8d8" transform="rotate(30 1004 450)"/><ellipse cx="965" cy="447" rx="3" ry="2.2" fill="#3ad8d8" transform="rotate(-20 965 447)"/><ellipse cx="885" cy="453" rx="5" ry="3" fill="#3ad8d8" transform="rotate(0 885 453)"/><ellipse cx="832" cy="408" rx="3" ry="2" fill="#3ad8d8" transform="rotate(30 832 408)"/><ellipse cx="869" cy="398" rx="2.5" ry="1.8" fill="#3ad8d8" transform="rotate(-30 869 398)"/><ellipse cx="861" cy="408" rx="2.5" ry="1.8" fill="#3ad8d8" transform="rotate(30 861 408)"/><ellipse cx="873" cy="416" rx="2.5" ry="1.8" fill="#3ad8d8" transform="rotate(-30 873 416)"/><ellipse cx="912" cy="448" rx="6" ry="5" fill="#20a080" transform="rotate(0 912 448)"/><ellipse cx="770" cy="430" rx="3" ry="2" fill="#20a080" transform="rotate(30 770 430)"/><path d="M1036,394 C1042,410 1040,430 1038,455" stroke="#d0f8d0" stroke-width="2.6" fill="none"/><path d="M1066,416 C1070,428 1069,442 1068,455" stroke="#c8f0c8" stroke-width="2.2" fill="none"/><path d="M1083,393 L1083,455" stroke="#c8f0c0" stroke-width="1.4" fill="none"/><path d="M1083,402 l-3.5,-3 M1083,406 l3.5,-3" stroke="#c8f0c0" stroke-width="1.2"/><path d="M1083,410 l-3.5,-3 M1083,414 l3.5,-3" stroke="#c8f0c0" stroke-width="1.2"/><path d="M1083,418 l-3.5,-3 M1083,422 l3.5,-3" stroke="#c8f0c0" stroke-width="1.2"/><path d="M1083,426 l-3.5,-3 M1083,430 l3.5,-3" stroke="#c8f0c0" stroke-width="1.2"/><path d="M1083,434 l-3.5,-3 M1083,438 l3.5,-3" stroke="#c8f0c0" stroke-width="1.2"/><path d="M1083,442 l-3.5,-3 M1083,446 l3.5,-3" stroke="#c8f0c0" stroke-width="1.2"/><path d="M1017,453 C1020,440 1028,432 1035,430" stroke="#d0f8d0" stroke-width="2" fill="none"/><path d="M1097,428 C1105,432 1110,440 1108,450 C1100,445 1096,438 1097,428 Z" fill="#0a4a3a" /><path d="M1100,452 C1108,446 1116,444 1122,446 C1115,452 1108,454 1100,452 Z" fill="#0a4a3a" /><path d="M1105,454 C1108,440 1115,432 1122,428" stroke="#0a4a3a" stroke-width="1.4" fill="none"/><path d="M966,408 C975,415 980,425 979,433 C970,428 965,418 966,408 Z" fill="#0a4a3a" /><path d="M968,454 C975,440 990,432 1012,424" stroke="#6a4a2a" stroke-width="1.3" fill="none"/><path d="M1056,454 L1062,420 M1052,440 L1060,430" stroke="#0a5a3a" stroke-width="1.4" fill="none"/></g></g>
<rect x="241" y="545" width="927" height="21" fill="#292929" />
<line x1="241" y1="545.5" x2="1168" y2="545.5" stroke="#1c1c1c" stroke-width="1" />
<rect x="248.5" y="548.5" width="9" height="7" fill="none" stroke="#c8c8c8" stroke-width="1.2"/>
<path d="M252,550 L255,552 L252,554 Z" fill="#c8c8c8" stroke="none" stroke-width="1" />
<path d="M246.5,551 L246.5,557.5 L255,557.5 M245,553 L245,559.5 L253.5,559.5" fill="none" stroke="#c8c8c8" stroke-width="1" />
<rect x="266.5" y="549.5" width="12" height="8.5" fill="none" stroke="#c8c8c8" stroke-width="1.2"/>
<line x1="272.5" y1="558" x2="272.5" y2="560.5" stroke="#c8c8c8" stroke-width="1.2" />
<line x1="268.5" y1="561" x2="276.5" y2="561" stroke="#c8c8c8" stroke-width="1.2" />
<path d="M285,552 C285,549 288,549 293,550 C298,549 301,549 301,552 C301,556 298,557 295.5,556 L293,554.5 L290.5,556 C288,557 285,556 285,552 Z" fill="#c8c8c8" stroke="none" stroke-width="1" />
<circle cx="289.5" cy="552.5" r="1.8" fill="#262626"/><circle cx="296.5" cy="552.5" r="1.8" fill="#262626"/>
<path d="M291,559.5 L295,559.5 L293,562 Z" fill="#e0e0e0" stroke="none" stroke-width="1" />
<rect x="306" y="547" width="61" height="18" fill="#1f1f1f" />
<text x="309" y="561" font-size="11.5" fill="#d8d8d8" font-weight="normal" text-anchor="start" textLength="21" lengthAdjust="spacingAndGlyphs" stroke="#d8d8d8" stroke-width="0.3" >25%</text>
<path d="M356.5,553.5 L359.7,556.7 L363,553.5" fill="none" stroke="#d0d0d0" stroke-width="1.2" />
<rect x="373.5" y="549" width="12.5" height="9" fill="none" stroke="#c8c8c8" stroke-width="1.2"/>
<line x1="379.7" y1="547" x2="379.7" y2="560" stroke="#c8c8c8" stroke-width="1" />
<line x1="371" y1="553.5" x2="388" y2="553.5" stroke="#c8c8c8" stroke-width="1" />
<path d="M378,561 L381.5,561 L379.7,563 Z" fill="#c8c8c8" stroke="none" stroke-width="1" />
<rect x="391" y="547" width="19" height="18" fill="#1a1a1a" />
<path d="M394.5,562 L395.5,552 L400,548.5 L407,548.5 L407,562 Z" fill="none" stroke="#5b9ee8" stroke-width="1.2" />
<rect x="413" y="547" width="60" height="18" fill="#1f1f1f" />
<text x="419" y="561" font-size="11.2" fill="#c8c8c8" font-weight="normal" text-anchor="start" textLength="48" lengthAdjust="spacingAndGlyphs" stroke="#c8c8c8" stroke-width="0.3" >0:00:04:16</text>
<path d="M480,552 L483,552 L484.5,549.5 L488.5,549.5 L490,552 L493,552 L493,561 L480,561 Z" fill="#c8c8c8" stroke="none" stroke-width="1" />
<circle cx="486.5" cy="556.3" r="2.6" fill="#262626"/><circle cx="486.5" cy="556.3" r="1.4" fill="#c8c8c8"/>
<circle cx="506" cy="557" r="3.5" fill="none" stroke="#4a4a4a" stroke-width="1.6"/><circle cx="508" cy="552.5" r="3" fill="none" stroke="#4a4a4a" stroke-width="1.6"/>
<rect x="517" y="547" width="19" height="18" fill="#1f1f1f" />
<circle cx="528" cy="552" r="3.2" fill="#e03a3a"/><circle cx="525" cy="556.5" r="3.2" fill="#3ab04a"/><circle cx="531" cy="556.5" r="3.2" fill="#4a6ae0"/>
<path d="M530,560.5 L534,560.5 L532,563 Z" fill="#e0e0e0" stroke="none" stroke-width="1" />
<rect x="537" y="547" width="80" height="18" fill="#1f1f1f" />
<text x="545" y="561" font-size="11.5" fill="#d8d8d8" font-weight="normal" text-anchor="start" textLength="25" lengthAdjust="spacingAndGlyphs" stroke="#d8d8d8" stroke-width="0.3" >(Full)</text>
<path d="M609,553.5 L612.3,556.7 L615.5,553.5" fill="none" stroke="#d0d0d0" stroke-width="1.2" />
<rect x="626.5" y="549.5" width="12" height="11" fill="none" stroke="#c8c8c8" stroke-width="1.3"/>
<rect x="629" y="552" width="7" height="6" fill="#c8c8c8" />
<rect x="643" y="547" width="19" height="18" fill="#1a2840" />
<rect x="645.5" y="549.5" width="14" height="12" fill="none" stroke="#4a88d8" stroke-width="1.2"/>
<rect x="647" y="551" width="2" height="2" fill="#4a88d8" />
<rect x="651.5" y="551" width="2" height="2" fill="#4a88d8" />
<rect x="656" y="551" width="2" height="2" fill="#4a88d8" />
<rect x="649.2" y="554.5" width="2" height="2" fill="#4a88d8" />
<rect x="653.8" y="554.5" width="2" height="2" fill="#4a88d8" />
<rect x="647" y="558" width="2" height="2" fill="#4a88d8" />
<rect x="651.5" y="558" width="2" height="2" fill="#4a88d8" />
<rect x="656" y="558" width="2" height="2" fill="#4a88d8" />
<rect x="664" y="547" width="100" height="18" fill="#1f1f1f" />
<text x="670" y="561" font-size="11.5" fill="#d8d8d8" font-weight="normal" text-anchor="start" textLength="17" lengthAdjust="spacingAndGlyphs" stroke="#d8d8d8" stroke-width="0.3" >Top</text>
<path d="M750.5,553.5 L753.7,556.7 L757,553.5" fill="none" stroke="#d0d0d0" stroke-width="1.2" />
<rect x="767" y="547" width="64" height="18" fill="#1f1f1f" />
<text x="773" y="561" font-size="11.5" fill="#d8d8d8" font-weight="normal" text-anchor="start" textLength="36" lengthAdjust="spacingAndGlyphs" stroke="#d8d8d8" stroke-width="0.3" >2 Views</text>
<path d="M823,553.5 L826.3,556.7 L829.5,553.5" fill="none" stroke="#d0d0d0" stroke-width="1.2" />
<path d="M838.5,549 L852.5,549 M838.5,549 L841,547 M838.5,549 L841,551 M852.5,549 L850,547 M852.5,549 L850,551" fill="none" stroke="#c8c8c8" stroke-width="1.1" />
<rect x="840.5" y="552.5" width="10" height="7" fill="none" stroke="#c8c8c8" stroke-width="1.2"/>
<rect x="856" y="547" width="19" height="18" fill="#1a1a1a" />
<rect x="858.5" y="549.5" width="13" height="11" fill="none" stroke="#c8c8c8" stroke-width="1.2"/>
<path d="M866,551 L862,556 L865,556 L863.5,560 L868,554.5 L865,554.5 Z" fill="#c8c8c8" stroke="none" stroke-width="1" />
<path d="M868,561 L872,561 L870,563 Z" fill="#c8c8c8" stroke="none" stroke-width="1" />
<path d="M880.5,550 L880.5,559.5 L893.5,559.5 L893.5,550" fill="none" stroke="#c8c8c8" stroke-width="1.2" />
<rect x="883" y="551" width="2" height="6" fill="#c8c8c8" />
<rect x="886.5" y="553" width="2" height="4" fill="#c8c8c8" />
<rect x="890" y="551" width="2" height="6" fill="#c8c8c8" />
<rect x="903.5" y="548" width="6" height="4.5" fill="#c8c8c8" />
<rect x="900" y="556.5" width="5.5" height="4.5" fill="#c8c8c8" />
<rect x="908" y="556.5" width="5.5" height="4.5" fill="#c8c8c8" />
<path d="M906.5,552.5 L906.5,554.5 L902.7,554.5 L902.7,556.5 M906.5,554.5 L910.7,554.5 L910.7,556.5" fill="none" stroke="#c8c8c8" stroke-width="1" />
<circle cx="929.5" cy="555" r="6.2" fill="#c8c8c8"/><circle cx="929.5" cy="555" r="2.8" fill="#262626"/>
<line x1="932.3" y1="555.0" x2="934.61708081244" y2="558.5007833350492" stroke="#262626" stroke-width="0.9" />
<line x1="930.9" y1="557.4248711305964" x2="929.0267731049222" y2="561.1819136443156" stroke="#262626" stroke-width="0.9" />
<line x1="928.1" y1="557.4248711305964" x2="923.9096922924822" y2="557.6811303092663" stroke="#262626" stroke-width="0.9" />
<line x1="926.7" y1="555.0" x2="924.38291918756" y2="551.4992166649508" stroke="#262626" stroke-width="0.9" />
<line x1="928.1" y1="552.5751288694036" x2="929.9732268950778" y2="548.8180863556844" stroke="#262626" stroke-width="0.9" />
<line x1="930.9" y1="552.5751288694036" x2="935.0903077075178" y2="552.3188696907337" stroke="#262626" stroke-width="0.9" />
<text x="942" y="560.5" font-size="11" fill="#5b9ee8" font-weight="normal" text-anchor="start" textLength="19" lengthAdjust="spacingAndGlyphs" stroke="#5b9ee8" stroke-width="0.3" >+0.0</text>
<line x1="724.2" y1="97" x2="724.2" y2="111" stroke="#9a9a9a" stroke-width="1" />
<text x="726.7" y="106" font-size="8.6" fill="#b8b8b8" font-weight="normal" text-anchor="start" textLength="5.2" lengthAdjust="spacingAndGlyphs" >0</text>
<line x1="735.6750000000001" y1="107.5" x2="735.6750000000001" y2="111" stroke="#9a9a9a" stroke-width="1" />
<line x1="747.1500000000001" y1="105.5" x2="747.1500000000001" y2="111" stroke="#9a9a9a" stroke-width="1" />
<line x1="758.625" y1="107.5" x2="758.625" y2="111" stroke="#9a9a9a" stroke-width="1" />
<line x1="770.1" y1="97" x2="770.1" y2="111" stroke="#9a9a9a" stroke-width="1" />
<text x="772.6" y="106" font-size="8.6" fill="#b8b8b8" font-weight="normal" text-anchor="start" textLength="15.600000000000001" lengthAdjust="spacingAndGlyphs" >200</text>
<line x1="781.575" y1="107.5" x2="781.575" y2="111" stroke="#9a9a9a" stroke-width="1" />
<line x1="793.0500000000001" y1="105.5" x2="793.0500000000001" y2="111" stroke="#9a9a9a" stroke-width="1" />
<line x1="804.525" y1="107.5" x2="804.525" y2="111" stroke="#9a9a9a" stroke-width="1" />
<line x1="816.0" y1="97" x2="816.0" y2="111" stroke="#9a9a9a" stroke-width="1" />
<text x="818.5" y="106" font-size="8.6" fill="#b8b8b8" font-weight="normal" text-anchor="start" textLength="15.600000000000001" lengthAdjust="spacingAndGlyphs" >400</text>
<line x1="827.475" y1="107.5" x2="827.475" y2="111" stroke="#9a9a9a" stroke-width="1" />
<line x1="838.95" y1="105.5" x2="838.95" y2="111" stroke="#9a9a9a" stroke-width="1" />
<line x1="850.425" y1="107.5" x2="850.425" y2="111" stroke="#9a9a9a" stroke-width="1" />
<line x1="861.9000000000001" y1="97" x2="861.9000000000001" y2="111" stroke="#9a9a9a" stroke-width="1" />
<text x="864.4000000000001" y="106" font-size="8.6" fill="#b8b8b8" font-weight="normal" text-anchor="start" textLength="15.600000000000001" lengthAdjust="spacingAndGlyphs" >600</text>
<line x1="873.3750000000001" y1="107.5" x2="873.3750000000001" y2="111" stroke="#9a9a9a" stroke-width="1" />
<line x1="884.8500000000001" y1="105.5" x2="884.8500000000001" y2="111" stroke="#9a9a9a" stroke-width="1" />
<line x1="896.325" y1="107.5" x2="896.325" y2="111" stroke="#9a9a9a" stroke-width="1" />
<line x1="907.8000000000001" y1="97" x2="907.8000000000001" y2="111" stroke="#9a9a9a" stroke-width="1" />
<text x="910.3000000000001" y="106" font-size="8.6" fill="#b8b8b8" font-weight="normal" text-anchor="start" textLength="15.600000000000001" lengthAdjust="spacingAndGlyphs" >800</text>
<line x1="919.2750000000001" y1="107.5" x2="919.2750000000001" y2="111" stroke="#9a9a9a" stroke-width="1" />
<line x1="930.7500000000001" y1="105.5" x2="930.7500000000001" y2="111" stroke="#9a9a9a" stroke-width="1" />
<line x1="942.225" y1="107.5" x2="942.225" y2="111" stroke="#9a9a9a" stroke-width="1" />
<line x1="953.7" y1="97" x2="953.7" y2="111" stroke="#9a9a9a" stroke-width="1" />
<text x="956.2" y="106" font-size="8.6" fill="#b8b8b8" font-weight="normal" text-anchor="start" textLength="20.8" lengthAdjust="spacingAndGlyphs" >1000</text>
<line x1="965.1750000000001" y1="107.5" x2="965.1750000000001" y2="111" stroke="#9a9a9a" stroke-width="1" />
<line x1="976.6500000000001" y1="105.5" x2="976.6500000000001" y2="111" stroke="#9a9a9a" stroke-width="1" />
<line x1="988.125" y1="107.5" x2="988.125" y2="111" stroke="#9a9a9a" stroke-width="1" />
<line x1="999.6" y1="97" x2="999.6" y2="111" stroke="#9a9a9a" stroke-width="1" />
<text x="1002.1" y="106" font-size="8.6" fill="#b8b8b8" font-weight="normal" text-anchor="start" textLength="20.8" lengthAdjust="spacingAndGlyphs" >1200</text>
<line x1="1011.075" y1="107.5" x2="1011.075" y2="111" stroke="#9a9a9a" stroke-width="1" />
<line x1="1022.5500000000001" y1="105.5" x2="1022.5500000000001" y2="111" stroke="#9a9a9a" stroke-width="1" />
<line x1="1034.025" y1="107.5" x2="1034.025" y2="111" stroke="#9a9a9a" stroke-width="1" />
<line x1="1045.5" y1="97" x2="1045.5" y2="111" stroke="#9a9a9a" stroke-width="1" />
<text x="1048.0" y="106" font-size="8.6" fill="#b8b8b8" font-weight="normal" text-anchor="start" textLength="20.8" lengthAdjust="spacingAndGlyphs" >1400</text>
<line x1="1056.975" y1="107.5" x2="1056.975" y2="111" stroke="#9a9a9a" stroke-width="1" />
<line x1="1068.45" y1="105.5" x2="1068.45" y2="111" stroke="#9a9a9a" stroke-width="1" />
<line x1="1079.925" y1="107.5" x2="1079.925" y2="111" stroke="#9a9a9a" stroke-width="1" />
<line x1="1091.4" y1="97" x2="1091.4" y2="111" stroke="#9a9a9a" stroke-width="1" />
<text x="1093.9" y="106" font-size="8.6" fill="#b8b8b8" font-weight="normal" text-anchor="start" textLength="20.8" lengthAdjust="spacingAndGlyphs" >1600</text>
<line x1="1102.875" y1="107.5" x2="1102.875" y2="111" stroke="#9a9a9a" stroke-width="1" />
<line x1="1114.3500000000001" y1="105.5" x2="1114.3500000000001" y2="111" stroke="#9a9a9a" stroke-width="1" />
<line x1="1125.825" y1="107.5" x2="1125.825" y2="111" stroke="#9a9a9a" stroke-width="1" />
<line x1="1137.3" y1="97" x2="1137.3" y2="111" stroke="#9a9a9a" stroke-width="1" />
<text x="1139.8" y="106" font-size="8.6" fill="#b8b8b8" font-weight="normal" text-anchor="start" textLength="20.8" lengthAdjust="spacingAndGlyphs" >1800</text>
<line x1="1148.7749999999999" y1="107.5" x2="1148.7749999999999" y2="111" stroke="#9a9a9a" stroke-width="1" />
<line x1="1160.25" y1="105.5" x2="1160.25" y2="111" stroke="#9a9a9a" stroke-width="1" />
<line x1="741" y1="97" x2="741" y2="111" stroke="#2a3a7a" stroke-width="1.5" />
<line x1="705" y1="113.4" x2="719" y2="113.4" stroke="#9a9a9a" stroke-width="1" />
<text x="708" y="122.9" font-size="8" fill="#b8b8b8" font-weight="normal" text-anchor="start" textLength="4.6" lengthAdjust="spacingAndGlyphs" >4</text>
<text x="708" y="131.5" font-size="8" fill="#b8b8b8" font-weight="normal" text-anchor="start" textLength="4.6" lengthAdjust="spacingAndGlyphs" >0</text>
<text x="708" y="140.1" font-size="8" fill="#b8b8b8" font-weight="normal" text-anchor="start" textLength="4.6" lengthAdjust="spacingAndGlyphs" >0</text>
<line x1="715" y1="124.875" x2="719" y2="124.875" stroke="#9a9a9a" stroke-width="1" />
<line x1="713" y1="136.35" x2="719" y2="136.35" stroke="#9a9a9a" stroke-width="1" />
<line x1="715" y1="147.825" x2="719" y2="147.825" stroke="#9a9a9a" stroke-width="1" />
<line x1="705" y1="159.3" x2="719" y2="159.3" stroke="#9a9a9a" stroke-width="1" />
<text x="708" y="168.8" font-size="8" fill="#b8b8b8" font-weight="normal" text-anchor="start" textLength="4.6" lengthAdjust="spacingAndGlyphs" >2</text>
<text x="708" y="177.4" font-size="8" fill="#b8b8b8" font-weight="normal" text-anchor="start" textLength="4.6" lengthAdjust="spacingAndGlyphs" >0</text>
<text x="708" y="186.0" font-size="8" fill="#b8b8b8" font-weight="normal" text-anchor="start" textLength="4.6" lengthAdjust="spacingAndGlyphs" >0</text>
<line x1="715" y1="170.775" x2="719" y2="170.775" stroke="#9a9a9a" stroke-width="1" />
<line x1="713" y1="182.25" x2="719" y2="182.25" stroke="#9a9a9a" stroke-width="1" />
<line x1="715" y1="193.72500000000002" x2="719" y2="193.72500000000002" stroke="#9a9a9a" stroke-width="1" />
<line x1="705" y1="205.5" x2="719" y2="205.5" stroke="#9a9a9a" stroke-width="1" />
<text x="708" y="215.0" font-size="8" fill="#b8b8b8" font-weight="normal" text-anchor="start" textLength="4.6" lengthAdjust="spacingAndGlyphs" >0</text>
<line x1="715" y1="216.975" x2="719" y2="216.975" stroke="#9a9a9a" stroke-width="1" />
<line x1="713" y1="228.45" x2="719" y2="228.45" stroke="#9a9a9a" stroke-width="1" />
<line x1="715" y1="239.925" x2="719" y2="239.925" stroke="#9a9a9a" stroke-width="1" />
<line x1="705" y1="251.4" x2="719" y2="251.4" stroke="#9a9a9a" stroke-width="1" />
<text x="708" y="260.9" font-size="8" fill="#b8b8b8" font-weight="normal" text-anchor="start" textLength="4.6" lengthAdjust="spacingAndGlyphs" >2</text>
<text x="708" y="269.5" font-size="8" fill="#b8b8b8" font-weight="normal" text-anchor="start" textLength="4.6" lengthAdjust="spacingAndGlyphs" >0</text>
<text x="708" y="278.09999999999997" font-size="8" fill="#b8b8b8" font-weight="normal" text-anchor="start" textLength="4.6" lengthAdjust="spacingAndGlyphs" >0</text>
<line x1="715" y1="262.875" x2="719" y2="262.875" stroke="#9a9a9a" stroke-width="1" />
<line x1="713" y1="274.35" x2="719" y2="274.35" stroke="#9a9a9a" stroke-width="1" />
<line x1="715" y1="285.825" x2="719" y2="285.825" stroke="#9a9a9a" stroke-width="1" />
<line x1="705" y1="297.3" x2="719" y2="297.3" stroke="#9a9a9a" stroke-width="1" />
<text x="708" y="306.8" font-size="8" fill="#b8b8b8" font-weight="normal" text-anchor="start" textLength="4.6" lengthAdjust="spacingAndGlyphs" >4</text>
<text x="708" y="315.40000000000003" font-size="8" fill="#b8b8b8" font-weight="normal" text-anchor="start" textLength="4.6" lengthAdjust="spacingAndGlyphs" >0</text>
<text x="708" y="324.0" font-size="8" fill="#b8b8b8" font-weight="normal" text-anchor="start" textLength="4.6" lengthAdjust="spacingAndGlyphs" >0</text>
<line x1="715" y1="308.77500000000003" x2="719" y2="308.77500000000003" stroke="#9a9a9a" stroke-width="1" />
<line x1="713" y1="320.25" x2="719" y2="320.25" stroke="#9a9a9a" stroke-width="1" />
<line x1="715" y1="331.725" x2="719" y2="331.725" stroke="#9a9a9a" stroke-width="1" />
<line x1="705" y1="343.2" x2="719" y2="343.2" stroke="#9a9a9a" stroke-width="1" />
<text x="708" y="352.7" font-size="8" fill="#b8b8b8" font-weight="normal" text-anchor="start" textLength="4.6" lengthAdjust="spacingAndGlyphs" >6</text>
<text x="708" y="361.3" font-size="8" fill="#b8b8b8" font-weight="normal" text-anchor="start" textLength="4.6" lengthAdjust="spacingAndGlyphs" >0</text>
<text x="708" y="369.9" font-size="8" fill="#b8b8b8" font-weight="normal" text-anchor="start" textLength="4.6" lengthAdjust="spacingAndGlyphs" >0</text>
<line x1="715" y1="354.675" x2="719" y2="354.675" stroke="#9a9a9a" stroke-width="1" />
<line x1="713" y1="366.15" x2="719" y2="366.15" stroke="#9a9a9a" stroke-width="1" />
<line x1="715" y1="377.625" x2="719" y2="377.625" stroke="#9a9a9a" stroke-width="1" />
<line x1="705" y1="389.1" x2="719" y2="389.1" stroke="#9a9a9a" stroke-width="1" />
<text x="708" y="398.6" font-size="8" fill="#b8b8b8" font-weight="normal" text-anchor="start" textLength="4.6" lengthAdjust="spacingAndGlyphs" >8</text>
<text x="708" y="407.20000000000005" font-size="8" fill="#b8b8b8" font-weight="normal" text-anchor="start" textLength="4.6" lengthAdjust="spacingAndGlyphs" >0</text>
<text x="708" y="415.8" font-size="8" fill="#b8b8b8" font-weight="normal" text-anchor="start" textLength="4.6" lengthAdjust="spacingAndGlyphs" >0</text>
<line x1="715" y1="400.57500000000005" x2="719" y2="400.57500000000005" stroke="#9a9a9a" stroke-width="1" />
<line x1="713" y1="412.05" x2="719" y2="412.05" stroke="#9a9a9a" stroke-width="1" />
<line x1="715" y1="423.52500000000003" x2="719" y2="423.52500000000003" stroke="#9a9a9a" stroke-width="1" />
<line x1="705" y1="435" x2="719" y2="435" stroke="#9a9a9a" stroke-width="1" />
<text x="708" y="444.5" font-size="8" fill="#b8b8b8" font-weight="normal" text-anchor="start" textLength="4.6" lengthAdjust="spacingAndGlyphs" >1</text>
<text x="708" y="453.1" font-size="8" fill="#b8b8b8" font-weight="normal" text-anchor="start" textLength="4.6" lengthAdjust="spacingAndGlyphs" >0</text>
<text x="708" y="461.7" font-size="8" fill="#b8b8b8" font-weight="normal" text-anchor="start" textLength="4.6" lengthAdjust="spacingAndGlyphs" >0</text>
<text x="708" y="470.3" font-size="8" fill="#b8b8b8" font-weight="normal" text-anchor="start" textLength="4.6" lengthAdjust="spacingAndGlyphs" >0</text>
<line x1="715" y1="446.475" x2="719" y2="446.475" stroke="#9a9a9a" stroke-width="1" />
<line x1="713" y1="457.95" x2="719" y2="457.95" stroke="#9a9a9a" stroke-width="1" />
<line x1="715" y1="469.425" x2="719" y2="469.425" stroke="#9a9a9a" stroke-width="1" />
<line x1="705" y1="480.9" x2="719" y2="480.9" stroke="#9a9a9a" stroke-width="1" />
<text x="708" y="490.4" font-size="8" fill="#b8b8b8" font-weight="normal" text-anchor="start" textLength="4.6" lengthAdjust="spacingAndGlyphs" >1</text>
<text x="708" y="499.0" font-size="8" fill="#b8b8b8" font-weight="normal" text-anchor="start" textLength="4.6" lengthAdjust="spacingAndGlyphs" >2</text>
<text x="708" y="507.59999999999997" font-size="8" fill="#b8b8b8" font-weight="normal" text-anchor="start" textLength="4.6" lengthAdjust="spacingAndGlyphs" >0</text>
<text x="708" y="516.1999999999999" font-size="8" fill="#b8b8b8" font-weight="normal" text-anchor="start" textLength="4.6" lengthAdjust="spacingAndGlyphs" >0</text>
<line x1="715" y1="492.375" x2="719" y2="492.375" stroke="#9a9a9a" stroke-width="1" />
<line x1="713" y1="503.84999999999997" x2="719" y2="503.84999999999997" stroke="#9a9a9a" stroke-width="1" />
<line x1="715" y1="515.3249999999999" x2="719" y2="515.3249999999999" stroke="#9a9a9a" stroke-width="1" />
<line x1="705" y1="526.8" x2="719" y2="526.8" stroke="#9a9a9a" stroke-width="1" />
<text x="708" y="536.3" font-size="8" fill="#b8b8b8" font-weight="normal" text-anchor="start" textLength="4.6" lengthAdjust="spacingAndGlyphs" >1</text>
<text x="708" y="544.9" font-size="8" fill="#b8b8b8" font-weight="normal" text-anchor="start" textLength="4.6" lengthAdjust="spacingAndGlyphs" >4</text>
<line x1="715" y1="538.275" x2="719" y2="538.275" stroke="#9a9a9a" stroke-width="1" />
<line x1="705" y1="457" x2="720" y2="457" stroke="#3a6ab0" stroke-width="1" />
<path d="M25.5,582 L30.5,587 M30.5,582 L25.5,587" fill="none" stroke="#bdbdbd" stroke-width="1.1" />
<rect x="39.5" y="577.5" width="10" height="10.5" fill="#c2ab8a" stroke="#111" stroke-width="0.8"/>
<text x="59" y="588" font-size="11" fill="#d0d0d0" font-weight="normal" text-anchor="start" textLength="46" lengthAdjust="spacingAndGlyphs" stroke="#d0d0d0" stroke-width="0.3" >One Node</text>
<line x1="114" y1="581.5" x2="122" y2="581.5" stroke="#c8c8c8" stroke-width="1.2" />
<line x1="114" y1="584.8" x2="122" y2="584.8" stroke="#c8c8c8" stroke-width="1.2" />
<line x1="114" y1="588.1" x2="122" y2="588.1" stroke="#c8c8c8" stroke-width="1.2" />
<text x="27" y="613.5" font-size="13.2" fill="#5aa0e6" font-weight="bold" text-anchor="start" textLength="69" lengthAdjust="spacingAndGlyphs" >0:00:04:16</text>
<text x="25" y="626.5" font-size="9.6" fill="#3f70aa" font-weight="normal" text-anchor="start" textLength="73" lengthAdjust="spacingAndGlyphs" stroke="#3f70aa" stroke-width="0.3" >00112 (24.00 fps)</text>
<rect x="110" y="605" width="478" height="17" fill="#171717" />
<circle cx="123" cy="611" r="3.6" fill="none" stroke="#d0d0d0" stroke-width="1.3"/>
<line x1="120.3" y1="613.8" x2="116" y2="618" stroke="#d0d0d0" stroke-width="1.4" />
<path d="M126.5,614.5 L130.5,614.5 L128.5,616.8 Z" fill="#d0d0d0" stroke="none" stroke-width="1" />
<path d="M605,612 L610,612 M610,610 L610,618 L615,618 M610,614 L615,614 M610,610 L615,610" fill="none" stroke="#c8c8c8" stroke-width="1.2" />
<rect x="604" y="611" width="4" height="2.5" fill="#c8c8c8" />
<rect x="614" y="608.5" width="4" height="3" fill="#c8c8c8" />
<rect x="614" y="612.5" width="4" height="3" fill="#c8c8c8" />
<rect x="614" y="616.5" width="4" height="3" fill="#c8c8c8" />
<path d="M616,620 L619,620 L617.5,622 Z" fill="#c8c8c8" stroke="none" stroke-width="1" />
<path d="M640,613 L646,610 L652,613 L652,619.5 L646,622.5 L640,619.5 Z M640,613 L646,616 L652,613 M646,616 L646,622.5" fill="none" stroke="#c8c8c8" stroke-width="1.2" />
<path d="M636,605 L636.7,608 L639.5,607 L637.5,609.5 L640,611.5 L636.8,611 L636,614 L635,611 L632,611.5 L634.5,609.5 L632.5,607 L635.3,608 Z" fill="#e8e8e8" stroke="none" stroke-width="1" />
<path d="M667,614 A7.5,6 0 0 1 682,614 Z" fill="#c8c8c8" stroke="none" stroke-width="1" />
<line x1="674.5" y1="614" x2="674.5" y2="619" stroke="#c8c8c8" stroke-width="1.4" />
<line x1="672" y1="617" x2="677" y2="617" stroke="#c8c8c8" stroke-width="1.2" />
<rect x="666" y="619.5" width="17" height="2" fill="#c8c8c8" />
<rect x="692.5" y="608.5" width="14" height="12" fill="none" stroke="#c8c8c8" stroke-width="1.2"/>
<rect x="695.5" y="606" width="11" height="12" fill="#c8c8c8" />
<rect x="698" y="609" width="6" height="1.2" fill="#333" />
<rect x="698" y="612" width="6" height="1.2" fill="#333" />
<circle cx="722" cy="616" r="5" fill="none" stroke="#c8c8c8" stroke-width="1.2"/><circle cx="724.5" cy="613.5" r="5" fill="#292929" stroke="#c8c8c8" stroke-width="1.2"/><circle cx="727" cy="611" r="5" fill="#777" stroke="#c8c8c8" stroke-width="1.2"/>
<rect x="749.5" y="607.5" width="14" height="14" fill="none" stroke="#c8c8c8" stroke-width="1.2"/>
<path d="M751.5,611 C755,611 755.5,618 761.5,618" fill="none" stroke="#c8c8c8" stroke-width="1.2" />
<line x1="751.0" y1="605.5" x2="751.0" y2="607.5" stroke="#c8c8c8" stroke-width="1" />
<line x1="754.5" y1="605.5" x2="754.5" y2="607.5" stroke="#c8c8c8" stroke-width="1" />
<line x1="758.0" y1="605.5" x2="758.0" y2="607.5" stroke="#c8c8c8" stroke-width="1" />
<line x1="761.5" y1="605.5" x2="761.5" y2="607.5" stroke="#c8c8c8" stroke-width="1" />
<rect x="18" y="632" width="760" height="16" fill="#333333" />
<line x1="18" y1="631.5" x2="778" y2="631.5" stroke="#1c1c1c" stroke-width="1" />
<line x1="18" y1="648" x2="778" y2="648" stroke="#141414" stroke-width="1.6" />
<path d="M19.5,640 Q25.5,633 31.5,640 Q25.5,647 19.5,640 Z" fill="#e6e6e6"/>
<circle cx="25.5" cy="640" r="2.7" fill="#161616"/>
<circle cx="26.4" cy="639.1" r="0.9" fill="#e6e6e6"/>
<path d="M35,637.5 L37.5,637.5 L41,634.5 L41,645.5 L37.5,642.5 L35,642.5 Z" fill="#c8c8c8" stroke="none" stroke-width="1" />
<path d="M42.5,637 Q44.5,640 42.5,643 M44,635 Q47.5,640 44,645" fill="none" stroke="#c8c8c8" stroke-width="1.2" />
<circle cx="53.5" cy="640.5" r="3.5" fill="#c8c8c8"/>
<path d="M65.3,639 L65.3,637.8 A2.9,2.9 0 0 1 71.1,637.8 L71.1,639" fill="none" stroke="#c8c8c8" stroke-width="1.4" />
<rect x="63.7" y="639" width="8.8" height="6.2" fill="#c8c8c8" />
<rect x="67.4" y="640.8" width="1.6" height="2.6" fill="#333" />
<line x1="79.5" y1="635" x2="79.5" y2="645" stroke="#1a1a1a" stroke-width="1.4" />
<path d="M91.5,636 L91.5,639.5 L98.5,646.5 L104,641 L97,634 L93.5,634 Z" fill="#cfcfcf" stroke="none" stroke-width="1" />
<circle cx="94.5" cy="637" r="1" fill="#333"/>
<line x1="109.5" y1="635" x2="109.5" y2="645" stroke="#1a1a1a" stroke-width="1.4" />
<text x="115" y="644" font-size="9" fill="#777" font-weight="normal" text-anchor="start" textLength="5" lengthAdjust="spacingAndGlyphs" stroke="#777" stroke-width="0.3" >#</text>
<line x1="140.5" y1="635" x2="140.5" y2="645" stroke="#1a1a1a" stroke-width="1.4" />
<text x="145" y="644" font-size="10.5" fill="#a8a8a8" font-weight="normal" text-anchor="start" textLength="47" lengthAdjust="spacingAndGlyphs" stroke="#a8a8a8" stroke-width="0.3" >Layer Name</text>
<line x1="467.5" y1="635" x2="467.5" y2="645" stroke="#1a1a1a" stroke-width="1.4" />
<path d="M472.5,640 A4.5,4.5 0 0 1 481.5,640 Z" fill="#d6d6d6" stroke="none" stroke-width="1" />
<rect x="474.6" y="637.6" width="1.6" height="2.2" fill="#333" />
<rect x="477.8" y="637.6" width="1.6" height="2.2" fill="#333" />
<rect x="476.2" y="639.5" width="1.6" height="4.5" fill="#d6d6d6" />
<rect x="471.5" y="642.8" width="3.5" height="1.3" fill="#d6d6d6" />
<rect x="479" y="642.8" width="3.5" height="1.3" fill="#d6d6d6" />
<circle cx="492" cy="640" r="2" fill="#d0d0d0"/>
<line x1="494.6" y1="640.0" x2="496.3" y2="640.0" stroke="#d0d0d0" stroke-width="1.1" />
<line x1="493.838477631085" y1="641.838477631085" x2="495.04055915910214" y2="643.0405591591021" stroke="#d0d0d0" stroke-width="1.1" />
<line x1="492.0" y1="642.6" x2="492.0" y2="644.3" stroke="#d0d0d0" stroke-width="1.1" />
<line x1="490.161522368915" y1="641.838477631085" x2="488.95944084089786" y2="643.0405591591021" stroke="#d0d0d0" stroke-width="1.1" />
<line x1="489.4" y1="640.0" x2="487.7" y2="640.0" stroke="#d0d0d0" stroke-width="1.1" />
<line x1="490.161522368915" y1="638.161522368915" x2="488.95944084089786" y2="636.9594408408979" stroke="#d0d0d0" stroke-width="1.1" />
<line x1="492.0" y1="637.4" x2="492.0" y2="635.7" stroke="#d0d0d0" stroke-width="1.1" />
<line x1="493.838477631085" y1="638.161522368915" x2="495.04055915910214" y2="636.9594408408979" stroke="#d0d0d0" stroke-width="1.1" />
<rect x="500.5" y="636.5" width="1.4" height="1.4" fill="#c8c8c8" />
<rect x="502.5" y="638.3" width="1.4" height="1.4" fill="#c8c8c8" />
<rect x="504.5" y="640.1" width="1.4" height="1.4" fill="#c8c8c8" />
<rect x="506.5" y="641.9" width="1.4" height="1.4" fill="#c8c8c8" />
<rect x="508.5" y="643.7" width="1.4" height="1.4" fill="#c8c8c8" />
<text x="515" y="644.5" font-size="11.5" fill="#c8c8c8" font-weight="normal" text-anchor="start" textLength="10" lengthAdjust="spacingAndGlyphs" stroke="#c8c8c8" stroke-width="0.3" font-style="italic">fx</text>
<rect x="527.5" y="635.5" width="10" height="10" fill="none" stroke="#c8c8c8" stroke-width="1.1"/>
<rect x="529.5" y="637.5" width="6" height="6" fill="#c8c8c8" />
<rect x="530.5" y="638.5" width="4" height="1" fill="#333" />
<rect x="530.5" y="640.5" width="4" height="1" fill="#333" />
<circle cx="544.5" cy="642" r="3.8" fill="none" stroke="#c8c8c8" stroke-width="1.1"/><circle cx="548" cy="638.5" r="4" fill="#888" stroke="#c8c8c8" stroke-width="1"/>
<circle cx="561" cy="640.5" r="4.6" fill="#d8d8d8"/>
<path d="M557.8,643.8 A4.6,4.6 0 0 1 564.2,637.2 Z" fill="#333" stroke="none" stroke-width="1" />
<path d="M570.5,637.3 L576.0,634.5 L581.5,637.3 L581.5,643.2 L576.0,646.0 L570.5,643.2 Z M570.5,637.3 L576.0,640.1 L581.5,637.3 M576.0,640.1 L576.0,646.0" fill="none" stroke="#d0d0d0" stroke-width="1.3" />
<line x1="597.5" y1="635" x2="597.5" y2="645" stroke="#1a1a1a" stroke-width="1.4" />
<text x="601" y="644" font-size="10.5" fill="#a8a8a8" font-weight="normal" text-anchor="start" textLength="52" lengthAdjust="spacingAndGlyphs" stroke="#a8a8a8" stroke-width="0.3" >Parent &amp; Link</text>
<line x1="706.5" y1="635" x2="706.5" y2="645" stroke="#1a1a1a" stroke-width="1.4" />
<text x="711" y="644" font-size="10.5" fill="#a8a8a8" font-weight="normal" text-anchor="start" textLength="28" lengthAdjust="spacingAndGlyphs" stroke="#a8a8a8" stroke-width="0.3" >Stretch</text>
<line x1="763.5" y1="635" x2="763.5" y2="645" stroke="#1a1a1a" stroke-width="1.4" />
<rect x="18" y="648.5" width="760" height="15.5" fill="#3b3b3b" />
<line x1="18" y1="663.5" x2="778" y2="663.5" stroke="#252525" stroke-width="1" />
<rect x="18" y="648.5" width="15" height="15" fill="#353535" />
<path d="M19.5,656 Q25.5,649 31.5,656 Q25.5,663 19.5,656 Z" fill="#e6e6e6"/>
<circle cx="25.5" cy="656" r="2.7" fill="#161616"/>
<circle cx="26.4" cy="655.1" r="0.9" fill="#e6e6e6"/>
<rect x="33" y="649" width="14" height="14" fill="#3c3c3c" />
<rect x="48" y="649" width="12.5" height="14" fill="#333333" />
<rect x="61.5" y="649" width="12.5" height="14" fill="#333333" />
<rect x="95.5" y="650.5" width="11.5" height="11" fill="#f2c0d4" stroke="#1a1a1a" stroke-width="0.8"/>
<text x="116.5" y="660.3" font-size="11.5" fill="#c8c8c8" font-weight="normal" text-anchor="start" textLength="6" lengthAdjust="spacingAndGlyphs" stroke="#c8c8c8" stroke-width="0.6" >1</text>
<path d="M86,654.5 L89,657.5 L92,654.5" fill="none" stroke="#c8c8c8" stroke-width="1.2" />
<path d="M144,652.5 L151,652.5 L151,654.5 L155,652 L155,660 L151,657.5 L151,659.5 L144,659.5 Z" fill="#bdbdbd" stroke="none" stroke-width="1" />
<rect x="159" y="649.8" width="307" height="12.6" fill="#3c3c3c" stroke="#bdbdbd" stroke-width="1.6"/>
<text x="161.5" y="660.3" font-size="11.5" fill="#d6d6d6" font-weight="normal" text-anchor="start" textLength="87" lengthAdjust="spacingAndGlyphs" stroke="#d6d6d6" stroke-width="0.3" >One Node Camera</text>
<path d="M472.5,656.5 A4.5,4.5 0 0 1 481.5,656.5 Z" fill="#d6d6d6" stroke="none" stroke-width="1" />
<rect x="474.6" y="654.1" width="1.6" height="2.2" fill="#3a3a3a" />
<rect x="477.8" y="654.1" width="1.6" height="2.2" fill="#3a3a3a" />
<rect x="476.2" y="656.0" width="1.6" height="4.5" fill="#d6d6d6" />
<rect x="471.5" y="659.3" width="3.5" height="1.3" fill="#d6d6d6" />
<rect x="479" y="659.3" width="3.5" height="1.3" fill="#d6d6d6" />
<path d="M606.5,656.0 a1.2,1.2 0 0 1 2.2,0 a2.4,2.4 0 0 1 -4.6,0.5 a3.6,3.6 0 0 1 7,-1.2 a5,5 0 0 1 -9.6,2" fill="none" stroke="#c8c8c8" stroke-width="1.3" />
<rect x="618.5" y="649" width="84" height="14" fill="#1e1e1e" />
<text x="624" y="660.3" font-size="11.5" fill="#e0e0e0" font-weight="normal" text-anchor="start" textLength="24" lengthAdjust="spacingAndGlyphs" stroke="#e0e0e0" stroke-width="0.3" >None</text>
<path d="M690,654.5 L693,657.5 L696,654.5" fill="none" stroke="#d0d0d0" stroke-width="1.3" />
<text x="711" y="660.3" font-size="11.5" fill="#5b9ee8" font-weight="normal" text-anchor="start" textLength="33" lengthAdjust="spacingAndGlyphs" stroke="#5b9ee8" stroke-width="0.3" >100.0%</text>
<rect x="18" y="664.5" width="760" height="15.5" fill="#262626" />
<line x1="18" y1="679.5" x2="778" y2="679.5" stroke="#252525" stroke-width="1" />
<path d="M27.5,668.5 L22.5,672 L27.5,675.5 Z" fill="#c8c8c8" stroke="none" stroke-width="1" />
<path d="M40,666.5 L45.5,672 L40,677.5 L34.5,672 Z" fill="#4a90e2" stroke="#10305a" stroke-width="1" />
<path d="M51.5,668.5 L56,672 L51.5,675.5 Z" fill="#555" stroke="none" stroke-width="1" />
<circle cx="134.5" cy="673" r="5" fill="none" stroke="#4a90e2" stroke-width="1.3"/>
<line x1="134.5" y1="673" x2="136.5" y2="670.5" stroke="#4a90e2" stroke-width="1.2" />
<rect x="133.5" y="666" width="2" height="1.5" fill="#4a90e2" />
<path d="M146,667 L146,677 L157,677 M146,675 L149,670 L152,674 L156,669" fill="none" stroke="#c8c8c8" stroke-width="1.2" />
<rect x="162" y="665" width="304" height="15" fill="#3d3d3d" />
<text x="164" y="676.3" font-size="11.5" fill="#d6d6d6" font-weight="normal" text-anchor="start" textLength="37" lengthAdjust="spacingAndGlyphs" stroke="#d6d6d6" stroke-width="0.3" >Position</text>
<text x="472" y="676.3" font-size="11.5" fill="#5b9ee8" font-weight="normal" text-anchor="start" textLength="96" lengthAdjust="spacingAndGlyphs" stroke="#5b9ee8" stroke-width="0.3" >1155.0,480.0,-2401.7</text>
<path d="M618.5,672.0 a1.2,1.2 0 0 1 2.2,0 a2.4,2.4 0 0 1 -4.6,0.5 a3.6,3.6 0 0 1 7,-1.2 a5,5 0 0 1 -9.6,2" fill="none" stroke="#c8c8c8" stroke-width="1.3" />
<rect x="18" y="680.5" width="760" height="15.5" fill="#313131" />
<line x1="18" y1="695.5" x2="778" y2="695.5" stroke="#252525" stroke-width="1" />
<rect x="18" y="680.5" width="15" height="15" fill="#2b2b2b" />
<path d="M19.5,688 Q25.5,681 31.5,688 Q25.5,695 19.5,688 Z" fill="#e6e6e6"/>
<circle cx="25.5" cy="688" r="2.7" fill="#161616"/>
<circle cx="26.4" cy="687.1" r="0.9" fill="#e6e6e6"/>
<rect x="33" y="681" width="14" height="14" fill="#2a2a2a" />
<rect x="48" y="681" width="12.5" height="14" fill="#262626" />
<rect x="61.5" y="681" width="12.5" height="14" fill="#262626" />
<rect x="95.5" y="682.5" width="11.5" height="11" fill="#ee6ed8" stroke="#1a1a1a" stroke-width="0.8"/>
<text x="116.5" y="692.3" font-size="11.5" fill="#c8c8c8" font-weight="normal" text-anchor="start" textLength="6" lengthAdjust="spacingAndGlyphs" stroke="#c8c8c8" stroke-width="0.6" >2</text>
<path d="M87,685 L90,688 L87,691" fill="none" stroke="#c8c8c8" stroke-width="1.2" />
<rect x="144.5" y="681.5" width="10" height="13" fill="#2e140a" stroke="#9a5a3a" stroke-width="0.8" rx="1.5"/>
<text x="146.5" y="688.5" font-size="5" fill="#e07a4a" font-weight="normal" text-anchor="start" textLength="5" lengthAdjust="spacingAndGlyphs" stroke="#e07a4a" stroke-width="0.3" >Ai</text>
<rect x="148.5" y="690.3" width="2" height="2" fill="#e8e8e8" />
<text x="161" y="692.3" font-size="11.5" fill="#c8c8c8" font-weight="normal" text-anchor="start" textLength="98" lengthAdjust="spacingAndGlyphs" stroke="#c8c8c8" stroke-width="0.6" >Foreground Flowers</text>
<rect x="467" y="680.5" width="130" height="15" fill="#2a2a2a" />
<path d="M472.5,688.5 A4.5,4.5 0 0 1 481.5,688.5 Z" fill="#d6d6d6" stroke="none" stroke-width="1" />
<rect x="474.6" y="686.1" width="1.6" height="2.2" fill="#2a2a2a" />
<rect x="477.8" y="686.1" width="1.6" height="2.2" fill="#2a2a2a" />
<rect x="476.2" y="688.0" width="1.6" height="4.5" fill="#d6d6d6" />
<rect x="471.5" y="691.3" width="3.5" height="1.3" fill="#d6d6d6" />
<rect x="479" y="691.3" width="3.5" height="1.3" fill="#d6d6d6" />
<circle cx="492" cy="688" r="2" fill="#d0d0d0"/>
<line x1="494.6" y1="688.0" x2="496.3" y2="688.0" stroke="#d0d0d0" stroke-width="1.1" />
<line x1="493.838477631085" y1="689.838477631085" x2="495.04055915910214" y2="691.0405591591021" stroke="#d0d0d0" stroke-width="1.1" />
<line x1="492.0" y1="690.6" x2="492.0" y2="692.3" stroke="#d0d0d0" stroke-width="1.1" />
<line x1="490.161522368915" y1="689.838477631085" x2="488.95944084089786" y2="691.0405591591021" stroke="#d0d0d0" stroke-width="1.1" />
<line x1="489.4" y1="688.0" x2="487.7" y2="688.0" stroke="#d0d0d0" stroke-width="1.1" />
<line x1="490.161522368915" y1="686.161522368915" x2="488.95944084089786" y2="684.9594408408979" stroke="#d0d0d0" stroke-width="1.1" />
<line x1="492.0" y1="685.4" x2="492.0" y2="683.7" stroke="#d0d0d0" stroke-width="1.1" />
<line x1="493.838477631085" y1="686.161522368915" x2="495.04055915910214" y2="684.9594408408979" stroke="#d0d0d0" stroke-width="1.1" />
<line x1="501" y1="692.5" x2="510.5" y2="683.5" stroke="#d0d0d0" stroke-width="1.4" />
<rect x="541.5" y="681" width="14" height="14" fill="#262626" />
<rect x="556.5" y="681" width="13" height="14" fill="#262626" />
<path d="M571,685.0999999999999 L576.5,682.3 L582,685.0999999999999 L582,691.0 L576.5,693.8 L571,691.0 Z M571,685.0999999999999 L576.5,687.9 L582,685.0999999999999 M576.5,687.9 L576.5,693.8" fill="none" stroke="#d0d0d0" stroke-width="1.3" />
<path d="M606.5,688.0 a1.2,1.2 0 0 1 2.2,0 a2.4,2.4 0 0 1 -4.6,0.5 a3.6,3.6 0 0 1 7,-1.2 a5,5 0 0 1 -9.6,2" fill="none" stroke="#c8c8c8" stroke-width="1.3" />
<rect x="618.5" y="681" width="84" height="14" fill="#1e1e1e" />
<text x="624" y="692.3" font-size="11.5" fill="#e0e0e0" font-weight="normal" text-anchor="start" textLength="24" lengthAdjust="spacingAndGlyphs" stroke="#e0e0e0" stroke-width="0.3" >None</text>
<path d="M690,686.5 L693,689.5 L696,686.5" fill="none" stroke="#d0d0d0" stroke-width="1.3" />
<text x="711" y="692.3" font-size="11.5" fill="#5b9ee8" font-weight="normal" text-anchor="start" textLength="33" lengthAdjust="spacingAndGlyphs" stroke="#5b9ee8" stroke-width="0.3" >100.0%</text>
<rect x="18" y="696.5" width="760" height="15.5" fill="#313131" />
<line x1="18" y1="711.5" x2="778" y2="711.5" stroke="#252525" stroke-width="1" />
<rect x="18" y="696.5" width="15" height="15" fill="#2b2b2b" />
<path d="M19.5,704 Q25.5,697 31.5,704 Q25.5,711 19.5,704 Z" fill="#e6e6e6"/>
<circle cx="25.5" cy="704" r="2.7" fill="#161616"/>
<circle cx="26.4" cy="703.1" r="0.9" fill="#e6e6e6"/>
<rect x="33" y="697" width="14" height="14" fill="#2a2a2a" />
<rect x="48" y="697" width="12.5" height="14" fill="#262626" />
<rect x="61.5" y="697" width="12.5" height="14" fill="#262626" />
<rect x="95.5" y="698.5" width="11.5" height="11" fill="#ee6ed8" stroke="#1a1a1a" stroke-width="0.8"/>
<text x="116.5" y="708.3" font-size="11.5" fill="#c8c8c8" font-weight="normal" text-anchor="start" textLength="6" lengthAdjust="spacingAndGlyphs" stroke="#c8c8c8" stroke-width="0.6" >3</text>
<path d="M87,701 L90,704 L87,707" fill="none" stroke="#c8c8c8" stroke-width="1.2" />
<rect x="144.5" y="697.5" width="10" height="13" fill="#2e140a" stroke="#9a5a3a" stroke-width="0.8" rx="1.5"/>
<text x="146.5" y="704.5" font-size="5" fill="#e07a4a" font-weight="normal" text-anchor="start" textLength="5" lengthAdjust="spacingAndGlyphs" stroke="#e07a4a" stroke-width="0.3" >Ai</text>
<rect x="148.5" y="706.3" width="2" height="2" fill="#e8e8e8" />
<text x="161" y="708.3" font-size="11.5" fill="#c8c8c8" font-weight="normal" text-anchor="start" textLength="99.5" lengthAdjust="spacingAndGlyphs" stroke="#c8c8c8" stroke-width="0.6" >Background Flowers</text>
<rect x="467" y="696.5" width="130" height="15" fill="#2a2a2a" />
<path d="M472.5,704.5 A4.5,4.5 0 0 1 481.5,704.5 Z" fill="#d6d6d6" stroke="none" stroke-width="1" />
<rect x="474.6" y="702.1" width="1.6" height="2.2" fill="#2a2a2a" />
<rect x="477.8" y="702.1" width="1.6" height="2.2" fill="#2a2a2a" />
<rect x="476.2" y="704.0" width="1.6" height="4.5" fill="#d6d6d6" />
<rect x="471.5" y="707.3" width="3.5" height="1.3" fill="#d6d6d6" />
<rect x="479" y="707.3" width="3.5" height="1.3" fill="#d6d6d6" />
<circle cx="492" cy="704" r="2" fill="#d0d0d0"/>
<line x1="494.6" y1="704.0" x2="496.3" y2="704.0" stroke="#d0d0d0" stroke-width="1.1" />
<line x1="493.838477631085" y1="705.838477631085" x2="495.04055915910214" y2="707.0405591591021" stroke="#d0d0d0" stroke-width="1.1" />
<line x1="492.0" y1="706.6" x2="492.0" y2="708.3" stroke="#d0d0d0" stroke-width="1.1" />
<line x1="490.161522368915" y1="705.838477631085" x2="488.95944084089786" y2="707.0405591591021" stroke="#d0d0d0" stroke-width="1.1" />
<line x1="489.4" y1="704.0" x2="487.7" y2="704.0" stroke="#d0d0d0" stroke-width="1.1" />
<line x1="490.161522368915" y1="702.161522368915" x2="488.95944084089786" y2="700.9594408408979" stroke="#d0d0d0" stroke-width="1.1" />
<line x1="492.0" y1="701.4" x2="492.0" y2="699.7" stroke="#d0d0d0" stroke-width="1.1" />
<line x1="493.838477631085" y1="702.161522368915" x2="495.04055915910214" y2="700.9594408408979" stroke="#d0d0d0" stroke-width="1.1" />
<line x1="501" y1="708.5" x2="510.5" y2="699.5" stroke="#d0d0d0" stroke-width="1.4" />
<rect x="541.5" y="697" width="14" height="14" fill="#262626" />
<rect x="556.5" y="697" width="13" height="14" fill="#262626" />
<path d="M571,701.0999999999999 L576.5,698.3 L582,701.0999999999999 L582,707.0 L576.5,709.8 L571,707.0 Z M571,701.0999999999999 L576.5,703.9 L582,701.0999999999999 M576.5,703.9 L576.5,709.8" fill="none" stroke="#d0d0d0" stroke-width="1.3" />
<path d="M606.5,704.0 a1.2,1.2 0 0 1 2.2,0 a2.4,2.4 0 0 1 -4.6,0.5 a3.6,3.6 0 0 1 7,-1.2 a5,5 0 0 1 -9.6,2" fill="none" stroke="#c8c8c8" stroke-width="1.3" />
<rect x="618.5" y="697" width="84" height="14" fill="#1e1e1e" />
<text x="624" y="708.3" font-size="11.5" fill="#e0e0e0" font-weight="normal" text-anchor="start" textLength="24" lengthAdjust="spacingAndGlyphs" stroke="#e0e0e0" stroke-width="0.3" >None</text>
<path d="M690,702.5 L693,705.5 L696,702.5" fill="none" stroke="#d0d0d0" stroke-width="1.3" />
<text x="711" y="708.3" font-size="11.5" fill="#5b9ee8" font-weight="normal" text-anchor="start" textLength="33" lengthAdjust="spacingAndGlyphs" stroke="#5b9ee8" stroke-width="0.3" >100.0%</text>
<rect x="18" y="712.5" width="760" height="15.5" fill="#313131" />
<line x1="18" y1="727.5" x2="778" y2="727.5" stroke="#252525" stroke-width="1" />
<rect x="18" y="712.5" width="15" height="15" fill="#2b2b2b" />
<path d="M19.5,720 Q25.5,713 31.5,720 Q25.5,727 19.5,720 Z" fill="#e6e6e6"/>
<circle cx="25.5" cy="720" r="2.7" fill="#161616"/>
<circle cx="26.4" cy="719.1" r="0.9" fill="#e6e6e6"/>
<rect x="33" y="713" width="14" height="14" fill="#2a2a2a" />
<rect x="48" y="713" width="12.5" height="14" fill="#262626" />
<rect x="61.5" y="713" width="12.5" height="14" fill="#262626" />
<rect x="95.5" y="714.5" width="11.5" height="11" fill="#234a23" stroke="#1a1a1a" stroke-width="0.8"/>
<text x="116.5" y="724.3" font-size="11.5" fill="#c8c8c8" font-weight="normal" text-anchor="start" textLength="6" lengthAdjust="spacingAndGlyphs" stroke="#c8c8c8" stroke-width="0.6" >4</text>
<path d="M87,717 L90,720 L87,723" fill="none" stroke="#c8c8c8" stroke-width="1.2" />
<rect x="144.5" y="713.5" width="10" height="13" fill="#2e140a" stroke="#9a5a3a" stroke-width="0.8" rx="1.5"/>
<text x="146.5" y="720.5" font-size="5" fill="#e07a4a" font-weight="normal" text-anchor="start" textLength="5" lengthAdjust="spacingAndGlyphs" stroke="#e07a4a" stroke-width="0.3" >Ai</text>
<rect x="148.5" y="722.3" width="2" height="2" fill="#e8e8e8" />
<text x="161" y="724.3" font-size="11.5" fill="#c8c8c8" font-weight="normal" text-anchor="start" textLength="81" lengthAdjust="spacingAndGlyphs" stroke="#c8c8c8" stroke-width="0.6" >Foreground Hills</text>
<rect x="467" y="712.5" width="130" height="15" fill="#2a2a2a" />
<path d="M472.5,720.5 A4.5,4.5 0 0 1 481.5,720.5 Z" fill="#d6d6d6" stroke="none" stroke-width="1" />
<rect x="474.6" y="718.1" width="1.6" height="2.2" fill="#2a2a2a" />
<rect x="477.8" y="718.1" width="1.6" height="2.2" fill="#2a2a2a" />
<rect x="476.2" y="720.0" width="1.6" height="4.5" fill="#d6d6d6" />
<rect x="471.5" y="723.3" width="3.5" height="1.3" fill="#d6d6d6" />
<rect x="479" y="723.3" width="3.5" height="1.3" fill="#d6d6d6" />
<circle cx="492" cy="720" r="2" fill="#d0d0d0"/>
<line x1="494.6" y1="720.0" x2="496.3" y2="720.0" stroke="#d0d0d0" stroke-width="1.1" />
<line x1="493.838477631085" y1="721.838477631085" x2="495.04055915910214" y2="723.0405591591021" stroke="#d0d0d0" stroke-width="1.1" />
<line x1="492.0" y1="722.6" x2="492.0" y2="724.3" stroke="#d0d0d0" stroke-width="1.1" />
<line x1="490.161522368915" y1="721.838477631085" x2="488.95944084089786" y2="723.0405591591021" stroke="#d0d0d0" stroke-width="1.1" />
<line x1="489.4" y1="720.0" x2="487.7" y2="720.0" stroke="#d0d0d0" stroke-width="1.1" />
<line x1="490.161522368915" y1="718.161522368915" x2="488.95944084089786" y2="716.9594408408979" stroke="#d0d0d0" stroke-width="1.1" />
<line x1="492.0" y1="717.4" x2="492.0" y2="715.7" stroke="#d0d0d0" stroke-width="1.1" />
<line x1="493.838477631085" y1="718.161522368915" x2="495.04055915910214" y2="716.9594408408979" stroke="#d0d0d0" stroke-width="1.1" />
<line x1="501" y1="724.5" x2="510.5" y2="715.5" stroke="#d0d0d0" stroke-width="1.4" />
<rect x="541.5" y="713" width="14" height="14" fill="#262626" />
<rect x="556.5" y="713" width="13" height="14" fill="#262626" />
<path d="M571,717.0999999999999 L576.5,714.3 L582,717.0999999999999 L582,723.0 L576.5,725.8 L571,723.0 Z M571,717.0999999999999 L576.5,719.9 L582,717.0999999999999 M576.5,719.9 L576.5,725.8" fill="none" stroke="#d0d0d0" stroke-width="1.3" />
<path d="M606.5,720.0 a1.2,1.2 0 0 1 2.2,0 a2.4,2.4 0 0 1 -4.6,0.5 a3.6,3.6 0 0 1 7,-1.2 a5,5 0 0 1 -9.6,2" fill="none" stroke="#c8c8c8" stroke-width="1.3" />
<rect x="618.5" y="713" width="84" height="14" fill="#1e1e1e" />
<text x="624" y="724.3" font-size="11.5" fill="#e0e0e0" font-weight="normal" text-anchor="start" textLength="24" lengthAdjust="spacingAndGlyphs" stroke="#e0e0e0" stroke-width="0.3" >None</text>
<path d="M690,718.5 L693,721.5 L696,718.5" fill="none" stroke="#d0d0d0" stroke-width="1.3" />
<text x="711" y="724.3" font-size="11.5" fill="#5b9ee8" font-weight="normal" text-anchor="start" textLength="33" lengthAdjust="spacingAndGlyphs" stroke="#5b9ee8" stroke-width="0.3" >100.0%</text>
<rect x="18" y="728.5" width="760" height="15.5" fill="#313131" />
<line x1="18" y1="743.5" x2="778" y2="743.5" stroke="#252525" stroke-width="1" />
<rect x="18" y="728.5" width="15" height="15" fill="#2b2b2b" />
<path d="M19.5,736 Q25.5,729 31.5,736 Q25.5,743 19.5,736 Z" fill="#e6e6e6"/>
<circle cx="25.5" cy="736" r="2.7" fill="#161616"/>
<circle cx="26.4" cy="735.1" r="0.9" fill="#e6e6e6"/>
<rect x="33" y="729" width="14" height="14" fill="#2a2a2a" />
<rect x="48" y="729" width="12.5" height="14" fill="#262626" />
<rect x="61.5" y="729" width="12.5" height="14" fill="#262626" />
<rect x="95.5" y="730.5" width="11.5" height="11" fill="#b8bce0" stroke="#1a1a1a" stroke-width="0.8"/>
<text x="116.5" y="740.3" font-size="11.5" fill="#c8c8c8" font-weight="normal" text-anchor="start" textLength="6" lengthAdjust="spacingAndGlyphs" stroke="#c8c8c8" stroke-width="0.6" >5</text>
<path d="M87,733 L90,736 L87,739" fill="none" stroke="#c8c8c8" stroke-width="1.2" />
<rect x="144.5" y="729.5" width="10" height="13" fill="#2e140a" stroke="#9a5a3a" stroke-width="0.8" rx="1.5"/>
<text x="146.5" y="736.5" font-size="5" fill="#e07a4a" font-weight="normal" text-anchor="start" textLength="5" lengthAdjust="spacingAndGlyphs" stroke="#e07a4a" stroke-width="0.3" >Ai</text>
<rect x="148.5" y="738.3" width="2" height="2" fill="#e8e8e8" />
<text x="161" y="740.3" font-size="11.5" fill="#c8c8c8" font-weight="normal" text-anchor="start" textLength="37" lengthAdjust="spacingAndGlyphs" stroke="#c8c8c8" stroke-width="0.6" >Hippies</text>
<rect x="467" y="728.5" width="130" height="15" fill="#2a2a2a" />
<path d="M472.5,736.5 A4.5,4.5 0 0 1 481.5,736.5 Z" fill="#d6d6d6" stroke="none" stroke-width="1" />
<rect x="474.6" y="734.1" width="1.6" height="2.2" fill="#2a2a2a" />
<rect x="477.8" y="734.1" width="1.6" height="2.2" fill="#2a2a2a" />
<rect x="476.2" y="736.0" width="1.6" height="4.5" fill="#d6d6d6" />
<rect x="471.5" y="739.3" width="3.5" height="1.3" fill="#d6d6d6" />
<rect x="479" y="739.3" width="3.5" height="1.3" fill="#d6d6d6" />
<circle cx="492" cy="736" r="2" fill="#d0d0d0"/>
<line x1="494.6" y1="736.0" x2="496.3" y2="736.0" stroke="#d0d0d0" stroke-width="1.1" />
<line x1="493.838477631085" y1="737.838477631085" x2="495.04055915910214" y2="739.0405591591021" stroke="#d0d0d0" stroke-width="1.1" />
<line x1="492.0" y1="738.6" x2="492.0" y2="740.3" stroke="#d0d0d0" stroke-width="1.1" />
<line x1="490.161522368915" y1="737.838477631085" x2="488.95944084089786" y2="739.0405591591021" stroke="#d0d0d0" stroke-width="1.1" />
<line x1="489.4" y1="736.0" x2="487.7" y2="736.0" stroke="#d0d0d0" stroke-width="1.1" />
<line x1="490.161522368915" y1="734.161522368915" x2="488.95944084089786" y2="732.9594408408979" stroke="#d0d0d0" stroke-width="1.1" />
<line x1="492.0" y1="733.4" x2="492.0" y2="731.7" stroke="#d0d0d0" stroke-width="1.1" />
<line x1="493.838477631085" y1="734.161522368915" x2="495.04055915910214" y2="732.9594408408979" stroke="#d0d0d0" stroke-width="1.1" />
<line x1="501" y1="740.5" x2="510.5" y2="731.5" stroke="#d0d0d0" stroke-width="1.4" />
<rect x="541.5" y="729" width="14" height="14" fill="#262626" />
<rect x="556.5" y="729" width="13" height="14" fill="#262626" />
<path d="M571,733.0999999999999 L576.5,730.3 L582,733.0999999999999 L582,739.0 L576.5,741.8 L571,739.0 Z M571,733.0999999999999 L576.5,735.9 L582,733.0999999999999 M576.5,735.9 L576.5,741.8" fill="none" stroke="#d0d0d0" stroke-width="1.3" />
<path d="M606.5,736.0 a1.2,1.2 0 0 1 2.2,0 a2.4,2.4 0 0 1 -4.6,0.5 a3.6,3.6 0 0 1 7,-1.2 a5,5 0 0 1 -9.6,2" fill="none" stroke="#c8c8c8" stroke-width="1.3" />
<rect x="618.5" y="729" width="84" height="14" fill="#1e1e1e" />
<text x="624" y="740.3" font-size="11.5" fill="#e0e0e0" font-weight="normal" text-anchor="start" textLength="24" lengthAdjust="spacingAndGlyphs" stroke="#e0e0e0" stroke-width="0.3" >None</text>
<path d="M690,734.5 L693,737.5 L696,734.5" fill="none" stroke="#d0d0d0" stroke-width="1.3" />
<text x="711" y="740.3" font-size="11.5" fill="#5b9ee8" font-weight="normal" text-anchor="start" textLength="33" lengthAdjust="spacingAndGlyphs" stroke="#5b9ee8" stroke-width="0.3" >100.0%</text>
<rect x="18" y="744.5" width="760" height="15.5" fill="#313131" />
<line x1="18" y1="759.5" x2="778" y2="759.5" stroke="#252525" stroke-width="1" />
<rect x="18" y="744.5" width="15" height="15" fill="#2b2b2b" />
<path d="M19.5,752 Q25.5,745 31.5,752 Q25.5,759 19.5,752 Z" fill="#e6e6e6"/>
<circle cx="25.5" cy="752" r="2.7" fill="#161616"/>
<circle cx="26.4" cy="751.1" r="0.9" fill="#e6e6e6"/>
<rect x="33" y="745" width="14" height="14" fill="#2a2a2a" />
<rect x="48" y="745" width="12.5" height="14" fill="#262626" />
<rect x="61.5" y="745" width="12.5" height="14" fill="#262626" />
<rect x="95.5" y="746.5" width="11.5" height="11" fill="#4aaa55" stroke="#1a1a1a" stroke-width="0.8"/>
<text x="116.5" y="756.3" font-size="11.5" fill="#c8c8c8" font-weight="normal" text-anchor="start" textLength="6" lengthAdjust="spacingAndGlyphs" stroke="#c8c8c8" stroke-width="0.6" >6</text>
<path d="M87,749 L90,752 L87,755" fill="none" stroke="#c8c8c8" stroke-width="1.2" />
<rect x="144.5" y="745.5" width="10" height="13" fill="#2e140a" stroke="#9a5a3a" stroke-width="0.8" rx="1.5"/>
<text x="146.5" y="752.5" font-size="5" fill="#e07a4a" font-weight="normal" text-anchor="start" textLength="5" lengthAdjust="spacingAndGlyphs" stroke="#e07a4a" stroke-width="0.3" >Ai</text>
<rect x="148.5" y="754.3" width="2" height="2" fill="#e8e8e8" />
<text x="161" y="756.3" font-size="11.5" fill="#c8c8c8" font-weight="normal" text-anchor="start" textLength="78" lengthAdjust="spacingAndGlyphs" stroke="#c8c8c8" stroke-width="0.6" >Midground Hills</text>
<rect x="467" y="744.5" width="130" height="15" fill="#2a2a2a" />
<path d="M472.5,752.5 A4.5,4.5 0 0 1 481.5,752.5 Z" fill="#d6d6d6" stroke="none" stroke-width="1" />
<rect x="474.6" y="750.1" width="1.6" height="2.2" fill="#2a2a2a" />
<rect x="477.8" y="750.1" width="1.6" height="2.2" fill="#2a2a2a" />
<rect x="476.2" y="752.0" width="1.6" height="4.5" fill="#d6d6d6" />
<rect x="471.5" y="755.3" width="3.5" height="1.3" fill="#d6d6d6" />
<rect x="479" y="755.3" width="3.5" height="1.3" fill="#d6d6d6" />
<circle cx="492" cy="752" r="2" fill="#d0d0d0"/>
<line x1="494.6" y1="752.0" x2="496.3" y2="752.0" stroke="#d0d0d0" stroke-width="1.1" />
<line x1="493.838477631085" y1="753.838477631085" x2="495.04055915910214" y2="755.0405591591021" stroke="#d0d0d0" stroke-width="1.1" />
<line x1="492.0" y1="754.6" x2="492.0" y2="756.3" stroke="#d0d0d0" stroke-width="1.1" />
<line x1="490.161522368915" y1="753.838477631085" x2="488.95944084089786" y2="755.0405591591021" stroke="#d0d0d0" stroke-width="1.1" />
<line x1="489.4" y1="752.0" x2="487.7" y2="752.0" stroke="#d0d0d0" stroke-width="1.1" />
<line x1="490.161522368915" y1="750.161522368915" x2="488.95944084089786" y2="748.9594408408979" stroke="#d0d0d0" stroke-width="1.1" />
<line x1="492.0" y1="749.4" x2="492.0" y2="747.7" stroke="#d0d0d0" stroke-width="1.1" />
<line x1="493.838477631085" y1="750.161522368915" x2="495.04055915910214" y2="748.9594408408979" stroke="#d0d0d0" stroke-width="1.1" />
<line x1="501" y1="756.5" x2="510.5" y2="747.5" stroke="#d0d0d0" stroke-width="1.4" />
<rect x="541.5" y="745" width="14" height="14" fill="#262626" />
<rect x="556.5" y="745" width="13" height="14" fill="#262626" />
<path d="M571,749.0999999999999 L576.5,746.3 L582,749.0999999999999 L582,755.0 L576.5,757.8 L571,755.0 Z M571,749.0999999999999 L576.5,751.9 L582,749.0999999999999 M576.5,751.9 L576.5,757.8" fill="none" stroke="#d0d0d0" stroke-width="1.3" />
<path d="M606.5,752.0 a1.2,1.2 0 0 1 2.2,0 a2.4,2.4 0 0 1 -4.6,0.5 a3.6,3.6 0 0 1 7,-1.2 a5,5 0 0 1 -9.6,2" fill="none" stroke="#c8c8c8" stroke-width="1.3" />
<rect x="618.5" y="745" width="84" height="14" fill="#1e1e1e" />
<text x="624" y="756.3" font-size="11.5" fill="#e0e0e0" font-weight="normal" text-anchor="start" textLength="24" lengthAdjust="spacingAndGlyphs" stroke="#e0e0e0" stroke-width="0.3" >None</text>
<path d="M690,750.5 L693,753.5 L696,750.5" fill="none" stroke="#d0d0d0" stroke-width="1.3" />
<text x="711" y="756.3" font-size="11.5" fill="#5b9ee8" font-weight="normal" text-anchor="start" textLength="33" lengthAdjust="spacingAndGlyphs" stroke="#5b9ee8" stroke-width="0.3" >100.0%</text>
<rect x="18" y="760" width="1162" height="19" fill="#222222" />
<rect x="778" y="595" width="402" height="165" fill="#292929" />
<line x1="778.5" y1="632" x2="778.5" y2="760" stroke="#111" stroke-width="1.2" />
<rect x="779" y="603" width="401" height="9" fill="#6a6a6a" />
<path d="M785,603 L782,603 A3,4.5 0 0 0 782,612 L785,612 Z" fill="#3d8ced" stroke="none" stroke-width="1" />
<rect x="1027.5" y="603" width="3" height="9" fill="#8aa8c8" />
<clipPath id="rc"><rect x="779" y="612" width="401" height="20"/></clipPath>
<g clip-path="url(#rc)">
<text x="775.5" y="622" font-size="11" fill="#c0c0c0" font-weight="normal" text-anchor="start" textLength="24" lengthAdjust="spacingAndGlyphs" stroke="#c0c0c0" stroke-width="0.3" >0:00s</text>
</g>
<line x1="786" y1="624" x2="786" y2="628" stroke="#bbb" stroke-width="1" />
<text x="830.5" y="622" font-size="11" fill="#c0c0c0" font-weight="normal" text-anchor="start" textLength="15.5" lengthAdjust="spacingAndGlyphs" stroke="#c0c0c0" stroke-width="0.3" >01s</text>
<line x1="838" y1="624" x2="838" y2="628" stroke="#bbb" stroke-width="1" />
<text x="882.5" y="622" font-size="11" fill="#c0c0c0" font-weight="normal" text-anchor="start" textLength="15.5" lengthAdjust="spacingAndGlyphs" stroke="#c0c0c0" stroke-width="0.3" >02s</text>
<line x1="890" y1="624" x2="890" y2="628" stroke="#bbb" stroke-width="1" />
<text x="934.5" y="622" font-size="11" fill="#c0c0c0" font-weight="normal" text-anchor="start" textLength="15.5" lengthAdjust="spacingAndGlyphs" stroke="#c0c0c0" stroke-width="0.3" >03s</text>
<line x1="942" y1="624" x2="942" y2="628" stroke="#bbb" stroke-width="1" />
<text x="986.5" y="622" font-size="11" fill="#c0c0c0" font-weight="normal" text-anchor="start" textLength="15.5" lengthAdjust="spacingAndGlyphs" stroke="#c0c0c0" stroke-width="0.3" >04s</text>
<line x1="994" y1="624" x2="994" y2="628" stroke="#bbb" stroke-width="1" />
<text x="1038.5" y="622" font-size="11" fill="#c0c0c0" font-weight="normal" text-anchor="start" textLength="15.5" lengthAdjust="spacingAndGlyphs" stroke="#c0c0c0" stroke-width="0.3" >05s</text>
<line x1="1046" y1="624" x2="1046" y2="628" stroke="#bbb" stroke-width="1" />
<text x="1090.5" y="622" font-size="11" fill="#c0c0c0" font-weight="normal" text-anchor="start" textLength="15.5" lengthAdjust="spacingAndGlyphs" stroke="#c0c0c0" stroke-width="0.3" >06s</text>
<line x1="1098" y1="625" x2="1098" y2="635" stroke="#bbb" stroke-width="1" />
<text x="1142.5" y="622" font-size="11" fill="#c0c0c0" font-weight="normal" text-anchor="start" textLength="15.5" lengthAdjust="spacingAndGlyphs" stroke="#c0c0c0" stroke-width="0.3" >07s</text>
<line x1="1150" y1="625" x2="1150" y2="635" stroke="#bbb" stroke-width="1" />
<rect x="779" y="630" width="294" height="15" fill="#6a6a6a" />
<path d="M785,630 L782,630 A3,7.5 0 0 0 782,645 L785,645 Z" fill="#3d8ced" stroke="none" stroke-width="1" />
<path d="M1069,630 L1071,630 A3,7.5 0 0 1 1071,645 L1069,645 Z" fill="#3d8ced" stroke="none" stroke-width="1" />
<rect x="1073" y="630" width="107" height="16" fill="#262626" />
<circle cx="886" cy="646.5" r="1" fill="#40c040"/><circle cx="958" cy="646.5" r="1" fill="#40c040"/>
<rect x="1029" y="646" width="151" height="2.5" fill="#3ec04a" />
<rect x="779" y="648" width="401" height="112" fill="#2b2b2b" />
<rect x="785" y="649" width="395" height="15" fill="#e2aac0" />
<rect x="779" y="664" width="401" height="16" fill="#323232" />
<rect x="1068" y="664" width="112" height="16" fill="#262626" />
<rect x="785" y="680.5" width="395" height="15" fill="#a5528f" />
<line x1="785" y1="680" x2="1180" y2="680" stroke="#1a1a1a" stroke-width="1" />
<rect x="785" y="696.5" width="395" height="15" fill="#a5528f" />
<line x1="785" y1="696" x2="1180" y2="696" stroke="#1a1a1a" stroke-width="1" />
<rect x="785" y="712.5" width="395" height="15" fill="#2c4a2c" />
<line x1="785" y1="712" x2="1180" y2="712" stroke="#1a1a1a" stroke-width="1" />
<rect x="785" y="728.5" width="395" height="15" fill="#8a8698" />
<line x1="785" y1="728" x2="1180" y2="728" stroke="#1a1a1a" stroke-width="1" />
<rect x="785" y="744.5" width="395" height="15" fill="#3e7a44" />
<line x1="785" y1="744" x2="1180" y2="744" stroke="#1a1a1a" stroke-width="1" />
<rect x="1068" y="680" width="112" height="80" fill="rgba(0,0,0,0.07)" />
<rect x="785.5" y="649.5" width="227" height="13" fill="#f4e2ea" stroke="#222" stroke-width="0.8"/>
<text x="792" y="660.5" font-size="10.8" fill="#111" font-weight="normal" text-anchor="start" textLength="216" lengthAdjust="spacingAndGlyphs" stroke="#111" stroke-width="0.3" >With single node, the camera points straight ahead</text>
<path d="M782,664 L782,658.5 L786,655 L790,658.5 L790,664 Z" fill="#bdbdbd" stroke="none" stroke-width="1" />
<path d="M782,668 L790,668 L787.5,672.5 L790,677 L782,677 L784.5,672.5 Z" fill="#3d8ced" stroke="none" stroke-width="1" />
<path d="M1025,668 L1033,668 L1030.5,672.5 L1033,677 L1025,677 L1027.5,672.5 Z" fill="#3d8ced" stroke="none" stroke-width="1" />
<line x1="1029.5" y1="628" x2="1029.5" y2="760" stroke="#5aa0e8" stroke-width="0.9" />
<path d="M1024,616 L1035,616 L1035,624 L1029.5,629 L1024,624 Z" fill="#3d8ced" stroke="none" stroke-width="1" />
<line x1="1029.5" y1="620" x2="1029.5" y2="628" stroke="#1a3a6a" stroke-width="1.2" />
<path d="M0,657 L15,672 L0,687 Z" fill="#ffffff" stroke="#000" stroke-width="1.2" />
<path d="M1200,540 L1184.5,555.5 L1200,571 Z" fill="#ffffff" stroke="#000" stroke-width="1.2" />
<path d="M560,780 L577,763 L594,780 Z" fill="#ffffff" stroke="#000" stroke-width="1.2" />
</svg>
</body></html>
